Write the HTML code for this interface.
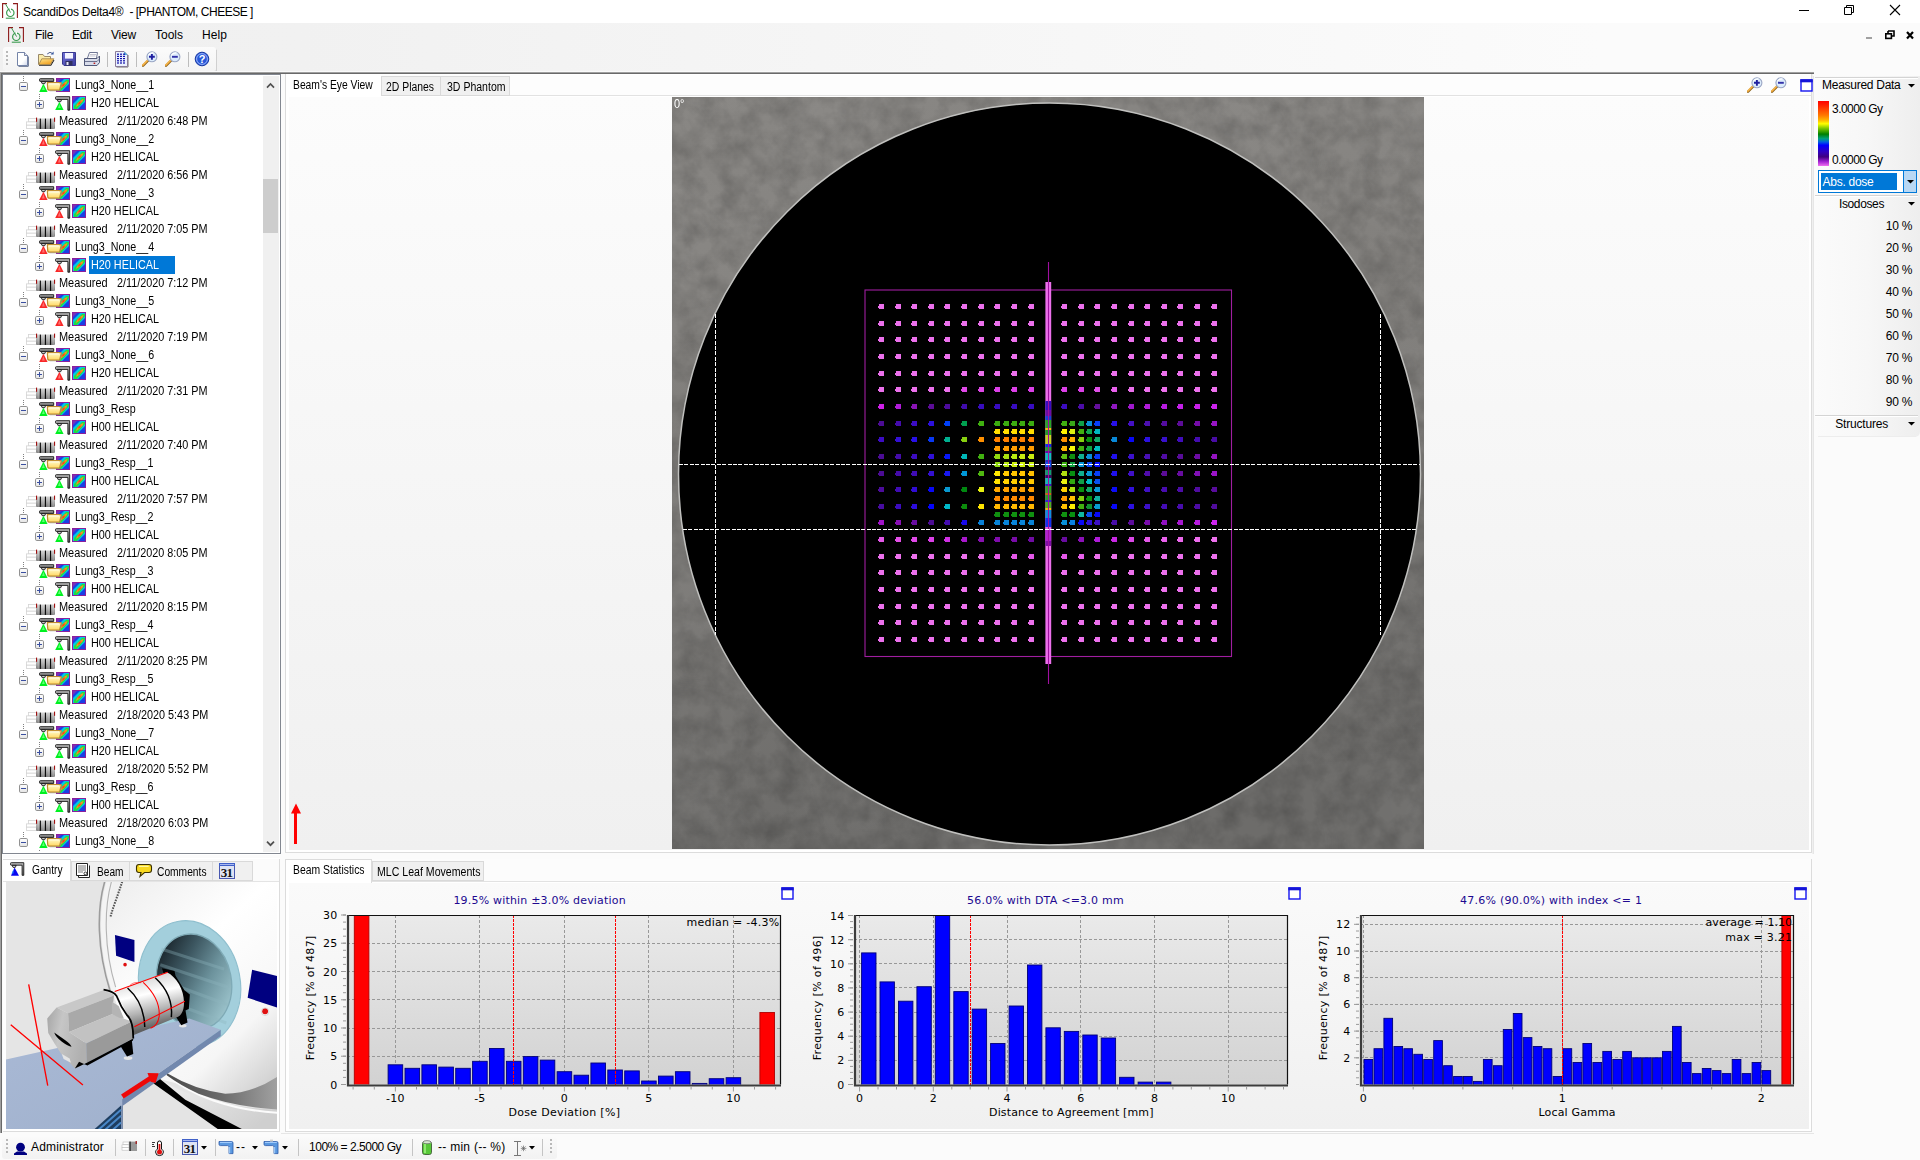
<!DOCTYPE html>
<html lang="en"><head><meta charset="utf-8"><title>ScandiDos Delta4</title>
<style>
html,body{margin:0;padding:0}
body{width:1920px;height:1160px;overflow:hidden;background:#fbfbfb;position:relative;font-family:"Liberation Sans",sans-serif;color:#000}
div,span.t,svg{position:absolute}
.t{white-space:pre;line-height:1;display:block}
.l{font-family:"Liberation Sans",sans-serif}
.d{font-family:"DejaVu Sans",sans-serif}
.s{font-family:"Liberation Serif",serif;font-weight:bold}
.b{font-weight:bold}
</style></head>
<body>
<svg width="0" height="0" style="position:absolute"><defs>
<linearGradient id="gBar" x1="0" y1="0" x2="0" y2="1"><stop offset="0" stop-color="#bbb"/><stop offset="1" stop-color="#666"/></linearGradient>
<linearGradient id="gFlap" x1="0" y1="0" x2="0.6" y2="1"><stop offset="0" stop-color="#ffe890"/><stop offset="1" stop-color="#f0a020"/></linearGradient><linearGradient id="gSave" x1="0" y1="0" x2="1" y2="1"><stop offset="0" stop-color="#7070d8"/><stop offset="1" stop-color="#3c3c9c"/></linearGradient><linearGradient id="gDoc" x1="0" y1="0" x2="1" y2="1"><stop offset="0" stop-color="#fff"/><stop offset="0.6" stop-color="#fff"/><stop offset="1" stop-color="#cdd6ea"/></linearGradient><linearGradient id="gFold" x1="0" y1="0" x2="0" y2="1"><stop offset="0" stop-color="#fffbd0"/><stop offset="1" stop-color="#ffd860"/></linearGradient>
<linearGradient id="gBox" x1="0" y1="0" x2="0" y2="1"><stop offset="0" stop-color="#fff"/><stop offset="1" stop-color="#e4e4e4"/></linearGradient>
<linearGradient id="gCyl" x1="0" y1="0" x2="0" y2="1"><stop offset="0" stop-color="#d2d2d2"/><stop offset="0.35" stop-color="#b6b6b6"/><stop offset="1" stop-color="#7e7e7e"/></linearGradient>
<linearGradient id="gDose" x1="0" y1="0" x2="1" y2="1"><stop offset="0" stop-color="#7020a0"/><stop offset="0.25" stop-color="#1030e0"/><stop offset="0.4" stop-color="#00d0e0"/><stop offset="0.5" stop-color="#30e030"/><stop offset="0.6" stop-color="#00d0e0"/><stop offset="0.8" stop-color="#1040e0"/><stop offset="1" stop-color="#2020c0"/></linearGradient>
<symbol id="iDose" viewBox="0 0 14 14"><rect x="0" y="0" width="14" height="14" fill="#8a1f9c"/><rect x="1" y="1" width="12" height="12" fill="#1a3fe6"/>
<path d="M1 13 L1 8 L8 1 L13 1 L13 6 L6 13Z" fill="#00c8e8"/><path d="M2 13 L2 10 L10 2 L13 2 L13 4 L5 13Z" fill="#20e040"/><path d="M4 11 L5 8 L9 4 L11.5 3 L10.5 5.5 L7 9Z" fill="#ff9020"/><path d="M5.5 9 L7 6.5 L9.5 5 L8 7.5Z" fill="#ff3020"/><path d="M1 1 L5 1 L1 5Z" fill="#7a2fb8"/></symbol>
<symbol id="iGan" viewBox="0 0 16 16"><path d="M0.5 1.5 Q0.5 0.7 1.4 0.7 L14.7 0.7 L14.7 14.2 L12.9 14.2 L12.9 3.4 L1.4 3.4 Q0.5 3.4 0.5 2.6Z" fill="url(#gBar)" stroke="#111" stroke-width="0.9"/><path d="M2.3 3.6 L6.6 3.6 L5.7 5.7 L3.2 5.7Z" fill="#e0e0e0" stroke="#111" stroke-width="0.9"/></symbol>
<symbol id="iGanS" viewBox="0 0 16 16"><path d="M0.5 1.5 Q0.5 0.7 1.4 0.7 L14.7 0.7 L14.7 3.4 L1.4 3.4 Q0.5 3.4 0.5 2.6Z" fill="url(#gBar)" stroke="#111" stroke-width="0.9"/><path d="M2.3 3.6 L6.6 3.6 L5.7 5.7 L3.2 5.7Z" fill="#e0e0e0" stroke="#111" stroke-width="0.9"/></symbol>
<symbol id="iConeG" viewBox="0 0 16 16"><path d="M4.4 5.8 L0.2 13.9 L8.6 13.9Z" fill="#00f020"/><path d="M4.4 8 L3 12 L5.8 12Z" fill="#60ff78"/></symbol>
<symbol id="iConeR" viewBox="0 0 16 16"><path d="M4.4 5.8 L0.2 13.9 L8.6 13.9Z" fill="#f82828"/><path d="M4.4 8 L3 12.4 L5.8 12.4Z" fill="#ff7070"/></symbol>
<symbol id="iFold" viewBox="0 0 16 10"><path d="M6.5 -2.5 L9 -2.5 L9 0 L6.5 0Z" fill="#e8b860"/><path d="M0.6 0.6 L14 0.6 Q14.8 0.6 14.6 1.6 L13.2 7.4 Q13 8.2 12 8.2 L2.4 8.2 Q1.4 8.2 1.2 7.2Z" fill="url(#gFold)" stroke="#c08c30" stroke-width="1.3"/><path d="M2.5 1.9 L12.5 1.9" stroke="#fffef0" stroke-width="1"/><path d="M14.9 2 L13.6 7.8 Q13.3 8.8 12.2 8.9 L3 8.9" fill="none" stroke="#8c8c8c" stroke-width="0.7" opacity="0.7"/></symbol>
<symbol id="iMeas" viewBox="0 0 30 12"><rect x="2.5" y="1.5" width="8" height="3.4" fill="#fff" stroke="#d4d4d4" stroke-width="0.8"/><rect x="0.5" y="4.9" width="10" height="3.3" fill="#fff" stroke="#d4d4d4" stroke-width="0.8"/><rect x="0.5" y="8.2" width="10" height="3.3" fill="#fff" stroke="#d4d4d4" stroke-width="0.8"/><rect x="10" y="1.6" width="19" height="10.3" rx="0.8" fill="url(#gCyl)"/><rect x="11.6" y="1.6" width="1.6" height="10.3" fill="#e6e6e6" opacity="0.2"/><rect x="16.4" y="1.6" width="1.6" height="10.3" fill="#e6e6e6" opacity="0.18"/><rect x="21.6" y="1.6" width="1.6" height="10.3" fill="#e6e6e6" opacity="0.18"/><rect x="26.6" y="1.6" width="1.4" height="10.3" fill="#e6e6e6" opacity="0.18"/><rect x="13.8" y="1.6" width="1.1" height="10.3" fill="#0a0a0a"/><rect x="18.9" y="1.6" width="1.1" height="10.3" fill="#0a0a0a"/><rect x="24" y="1.6" width="1.1" height="10.3" fill="#0a0a0a"/><rect x="10" y="0.6" width="1.1" height="4.2" fill="#a01010"/><rect x="28" y="0.6" width="1.1" height="4.2" fill="#a01010"/></symbol>
<symbol id="iMinus" viewBox="0 0 9 9"><rect x="0.5" y="0.5" width="8" height="8" rx="1.3" fill="url(#gBox)" stroke="#919191"/><rect x="2" y="4" width="5" height="1" fill="#3a4fa0"/></symbol>
<symbol id="iPlus" viewBox="0 0 9 9"><rect x="0.5" y="0.5" width="8" height="8" rx="1.3" fill="url(#gBox)" stroke="#919191"/><rect x="2" y="4" width="5" height="1" fill="#3a4fa0"/><rect x="4" y="2" width="1" height="5" fill="#3a4fa0"/></symbol>
<symbol id="iMax" viewBox="0 0 13 13"><rect x="1" y="1" width="11" height="11" fill="#fff" stroke="#1414f0" stroke-width="1.4"/><rect x="0.3" y="0.3" width="12.4" height="3" fill="#1414d8"/></symbol>
<symbol id="iZoom" viewBox="0 0 16 16"><path d="M1 14.6 L6.4 9.2" stroke="#8a6420" stroke-width="2.6" stroke-linecap="round"/><path d="M0.9 14.1 L6 9" stroke="#f4a838" stroke-width="1.7" stroke-linecap="round"/><path d="M0.8 13.6 L5.4 9" stroke="#ffe090" stroke-width="0.6" stroke-linecap="round"/><circle cx="9.9" cy="5.8" r="5" fill="#dcecfc" stroke="#9aa6c4" stroke-width="1.1"/><path d="M6.4 4.4 Q8 1.6 11.4 1.9" fill="none" stroke="#fff" stroke-width="1.2"/></symbol>
</defs></svg>
<!-- sec_chrome -->
<div style="left:0px;top:0px;width:1920px;height:23px;background:#fff;"></div>
<svg style="left:2px;top:3px" width="16" height="16" viewBox="0 0 16 16"><path d="M5 0.6 L0.6 0.6 L0.6 15 M11 0.6 L15.4 0.6 L15.4 15" fill="none" stroke="#8c1a1a" stroke-width="1.1"/><circle cx="8.3" cy="9.8" r="3.7" fill="none" stroke="#3c9c50" stroke-width="1.2"/><path d="M3.6 1.2 L8.6 9.6" stroke="#3c9c50" stroke-width="1"/><path d="M3.8 15.2 L12.8 15.2" stroke="#3c9c50" stroke-width="1.1"/><path d="M8.3 5 L8.3 7" stroke="#fff" stroke-width="1.4"/></svg>
<span class="t l" style="left:23.00px;top:5.00px;font-size:12px;line-height:14px;letter-spacing:-0.264px;">ScandiDos Delta4®</span>
<span class="t l" style="left:129.40px;top:5.00px;font-size:12px;line-height:14px;letter-spacing:-0.477px;">- [PHANTOM, CHEESE ]</span>
<svg style="left:1790px;top:0" width="130" height="23" viewBox="1790 0 130 23"><path d="M1799 10.5 H1809" stroke="#000" stroke-width="1"/><path d="M1844.5 7.5 H1851.5 V14.5 H1844.5Z M1846.5 7.5 V5.5 H1853.5 V12.5 H1851.5" fill="none" stroke="#000" stroke-width="1"/><path d="M1890 5 L1900 15 M1900 5 L1890 15" stroke="#000" stroke-width="1.1"/></svg>
<div style="left:0px;top:23px;width:1920px;height:49px;background:linear-gradient(90deg,#f0f0f0 0,#f1f1f1 300px,#fbfbfb 1600px,#fbfbfb 100%);"></div>
<svg style="left:8px;top:27px" width="16" height="16" viewBox="0 0 16 16"><path d="M5 0.6 L0.6 0.6 L0.6 15 M11 0.6 L15.4 0.6 L15.4 15" fill="none" stroke="#8c1a1a" stroke-width="1.1"/><circle cx="8.3" cy="9.8" r="3.7" fill="none" stroke="#3c9c50" stroke-width="1.2"/><path d="M3.6 1.2 L8.6 9.6" stroke="#3c9c50" stroke-width="1"/><path d="M3.8 15.2 L12.8 15.2" stroke="#3c9c50" stroke-width="1.1"/><path d="M8.3 5 L8.3 7" stroke="#fff" stroke-width="1.4"/></svg>
<span class="t l" style="left:35.00px;top:28.00px;font-size:12px;line-height:14px;letter-spacing:-0.334px;">File</span>
<span class="t l" style="left:72.00px;top:28.00px;font-size:12px;line-height:14px;letter-spacing:-0.169px;">Edit</span>
<span class="t l" style="left:111.00px;top:28.00px;font-size:12px;line-height:14px;letter-spacing:-0.198px;">View</span>
<span class="t l" style="left:155.00px;top:28.00px;font-size:12px;line-height:14px;letter-spacing:-0.002px;">Tools</span>
<span class="t l" style="left:202.00px;top:28.00px;font-size:12px;line-height:14px;letter-spacing:0.080px;">Help</span>
<svg style="left:1860px;top:26px" width="60" height="18" viewBox="1860 26 60 18"><rect x="1866" y="37" width="6" height="2" fill="#a0a0a0"/><path d="M1888 31 H1894 V36 H1892 M1888 31 V33" fill="none" stroke="#000" stroke-width="1.6"/><rect x="1885.8" y="33.8" width="5.6" height="4.6" fill="none" stroke="#000" stroke-width="1.6"/><path d="M1907 32 L1913 38.4 M1913 32 L1907 38.4" stroke="#000" stroke-width="2.2"/></svg>
<div style="left:3px;top:47px;width:213px;height:24px;background:linear-gradient(180deg,#fbfbfb,#f4f4f4);border-radius:3px;box-shadow:1px 1px 0 #e2e2e2"></div>
<svg style="left:0;top:47px" width="220" height="25" viewBox="0 47 220 25"><rect x="6" y="51" width="2" height="2" fill="#b8b8b8"/><rect x="6" y="55" width="2" height="2" fill="#b8b8b8"/><rect x="6" y="59" width="2" height="2" fill="#b8b8b8"/><rect x="6" y="63" width="2" height="2" fill="#b8b8b8"/><path d="M18.5 66.3 H28.3 V56.5" fill="none" stroke="#5a6888" stroke-width="1"/><path d="M17.5 52.5 H24.5 L27.5 55.5 V65.5 H17.5Z" fill="url(#gDoc)" stroke="#7484a8" stroke-width="1"/><path d="M24.5 52.5 V55.5 H27.5" fill="#e4e8f4" stroke="#5a6a90" stroke-width="0.8"/><path d="M39 65.3 H50.8 L54 60" fill="none" stroke="#222" stroke-width="1.1"/><path d="M38.5 64.5 V54.5 H43 L44.5 56.5 H50.5 V59" fill="#faeaa8" stroke="#988868" stroke-width="1"/><path d="M38.8 64.5 L41.8 58.8 H53.8 L50.3 64.5Z" fill="url(#gFlap)" stroke="#a8884c" stroke-width="0.9"/><path d="M47.2 54 Q50 50.8 52.8 53.6" fill="none" stroke="#506090" stroke-width="1"/><path d="M53.6 51.6 V54.6 H50.6Z" fill="#3858a0"/><path d="M62.5 52.5 H75.5 V65.5 H64 L62.5 64Z" fill="url(#gSave)" stroke="#383890" stroke-width="1"/><rect x="65" y="53" width="8" height="5.6" fill="#f4f4ff"/><rect x="65.5" y="61" width="7" height="4.5" fill="#303060"/><rect x="66.5" y="62" width="2" height="3" fill="#e8e8f8"/><path d="M87.5 58 L89.5 52.5 H97.5 L96.5 58" fill="#fff" stroke="#606888" stroke-width="0.9"/><path d="M84.5 58.5 H97 L99.5 56 V62.5 L97 65.5 H84.5Z" fill="#d8dcea" stroke="#505878" stroke-width="1"/><path d="M84.5 61.5 H97 L99.5 59" fill="none" stroke="#505878" stroke-width="0.8"/><rect x="93.6" y="62.6" width="1.6" height="1.4" fill="#c02020"/><path d="M90 54.5 H96 M89.5 56 H95.5" stroke="#aab" stroke-width="0.7"/><rect x="107" y="52" width="1" height="15" fill="#bdbdbd"/><path d="M116.5 67 H128 V55" fill="none" stroke="#707070" stroke-width="1"/><path d="M115.5 51.5 H124 L127.5 55 V66.5 H115.5Z" fill="#eaf0ff" stroke="#8a7c98" stroke-width="1"/><path d="M124 51.5 L124 55 L127.5 55Z" fill="#50a8d8"/><rect x="117" y="53.6" width="2" height="1.2" fill="#1010a8"/><rect x="120" y="53.6" width="2" height="1.2" fill="#1010a8"/><rect x="123" y="53.6" width="2" height="1.2" fill="#1010a8"/><rect x="117" y="55.8" width="2" height="1.2" fill="#1010a8"/><rect x="120" y="55.8" width="2" height="1.2" fill="#1010a8"/><rect x="123" y="55.8" width="2" height="1.2" fill="#1010a8"/><rect x="117" y="58" width="2" height="1.2" fill="#1010a8"/><rect x="120" y="58" width="2" height="1.2" fill="#1010a8"/><rect x="123" y="58" width="2" height="1.2" fill="#1010a8"/><rect x="117" y="60.2" width="2" height="1.2" fill="#1010a8"/><rect x="120" y="60.2" width="2" height="1.2" fill="#1010a8"/><rect x="123" y="60.2" width="2" height="1.2" fill="#1010a8"/><rect x="117" y="62.4" width="2" height="1.2" fill="#1010a8"/><rect x="120" y="62.4" width="2" height="1.2" fill="#1010a8"/><rect x="123" y="62.4" width="2" height="1.2" fill="#1010a8"/><rect x="136" y="52" width="1" height="15" fill="#bdbdbd"/><use href="#iZoom" x="142" y="51" width="16" height="16"/><path d="M149 56.8 H154.8 M151.9 53.9 V59.7" stroke="#2020a0" stroke-width="1.9"/><use href="#iZoom" x="165" y="51" width="16" height="16"/><path d="M172 56.8 H177.8" stroke="#3030a8" stroke-width="1.9"/><rect x="188" y="52" width="1" height="15" fill="#bdbdbd"/><circle cx="202" cy="59" r="6.8" fill="#2858d8" stroke="#1838a0" stroke-width="1"/><circle cx="202" cy="59" r="5.4" fill="none" stroke="#a8c0ff" stroke-width="0.9"/></svg><span class="t l b" style="left:198.74px;top:53.20px;font-size:11px;line-height:12px;color:#fff;">?</span><div style="left:216px;top:50px;width:1px;height:21px;background:#d0d0d0;"></div>
<div style="left:0px;top:71px;width:1814px;height:1px;background:#fafafa;"></div>
<div style="left:0px;top:72px;width:1814px;height:1px;background:#a0a0a0;"></div>
<div style="left:1px;top:73px;width:1813px;height:1px;background:#696969;"></div>
<div style="left:1px;top:74px;width:1813px;height:1px;background:#fcfcfc;"></div>
<div style="left:0px;top:72px;width:1px;height:1061px;background:#a0a0a0;"></div>
<div style="left:1px;top:73px;width:1px;height:1060px;background:#696969;"></div>
<!-- sec_tree -->
<div style="left:2px;top:74px;width:279px;height:780px;background:#fff;box-shadow:inset 0 0 0 1px #828790"></div>
<div style="left:263px;top:76px;width:16px;height:776px;background:#f0f0f0;"></div>
<div style="left:263px;top:179px;width:15px;height:54px;background:#cdcdcd;"></div>
<svg style="left:263px;top:76px" width="16" height="776" viewBox="0 0 16 776"><path d="M4 11.6 L7.5 8 L11 11.6" fill="none" stroke="#505050" stroke-width="1.7"/><path d="M4 765.6 L7.5 769.2 L11 765.6" fill="none" stroke="#505050" stroke-width="1.7"/></svg>
<svg style="left:0;top:76px" width="262" height="776" viewBox="0 76 262 776"><rect x="23" y="76" width="1" height="1" fill="#808080"/><rect x="23" y="78" width="1" height="1" fill="#808080"/><rect x="23" y="80" width="1" height="1" fill="#808080"/><use href="#iMinus" x="19" y="82" width="9" height="9"/><use href="#iDose" x="56" y="78" width="14" height="14"/><use href="#iGanS" x="39" y="78" width="16" height="16"/><use href="#iConeG" x="39" y="78" width="16" height="16"/><use href="#iFold" x="46.6" y="82" width="16" height="10"/><rect x="39" y="94" width="1" height="1" fill="#808080"/><rect x="39" y="96" width="1" height="1" fill="#808080"/><rect x="39" y="98" width="1" height="1" fill="#808080"/><use href="#iPlus" x="35" y="100" width="9" height="9"/><use href="#iGan" x="55" y="96" width="16" height="16"/><use href="#iConeG" x="55" y="96" width="16" height="16"/><use href="#iDose" x="72" y="96" width="14" height="14"/><use href="#iMeas" x="26" y="117" width="30" height="12"/><rect x="23" y="130" width="1" height="1" fill="#808080"/><rect x="23" y="132" width="1" height="1" fill="#808080"/><rect x="23" y="134" width="1" height="1" fill="#808080"/><use href="#iMinus" x="19" y="136" width="9" height="9"/><use href="#iDose" x="56" y="132" width="14" height="14"/><use href="#iGanS" x="39" y="132" width="16" height="16"/><use href="#iConeR" x="39" y="132" width="16" height="16"/><use href="#iFold" x="46.6" y="136" width="16" height="10"/><rect x="39" y="148" width="1" height="1" fill="#808080"/><rect x="39" y="150" width="1" height="1" fill="#808080"/><rect x="39" y="152" width="1" height="1" fill="#808080"/><use href="#iPlus" x="35" y="154" width="9" height="9"/><use href="#iGan" x="55" y="150" width="16" height="16"/><use href="#iConeR" x="55" y="150" width="16" height="16"/><use href="#iDose" x="72" y="150" width="14" height="14"/><use href="#iMeas" x="26" y="171" width="30" height="12"/><rect x="23" y="184" width="1" height="1" fill="#808080"/><rect x="23" y="186" width="1" height="1" fill="#808080"/><rect x="23" y="188" width="1" height="1" fill="#808080"/><use href="#iMinus" x="19" y="190" width="9" height="9"/><use href="#iDose" x="56" y="186" width="14" height="14"/><use href="#iGanS" x="39" y="186" width="16" height="16"/><use href="#iConeR" x="39" y="186" width="16" height="16"/><use href="#iFold" x="46.6" y="190" width="16" height="10"/><rect x="39" y="202" width="1" height="1" fill="#808080"/><rect x="39" y="204" width="1" height="1" fill="#808080"/><rect x="39" y="206" width="1" height="1" fill="#808080"/><use href="#iPlus" x="35" y="208" width="9" height="9"/><use href="#iGan" x="55" y="204" width="16" height="16"/><use href="#iConeR" x="55" y="204" width="16" height="16"/><use href="#iDose" x="72" y="204" width="14" height="14"/><use href="#iMeas" x="26" y="225" width="30" height="12"/><rect x="23" y="238" width="1" height="1" fill="#808080"/><rect x="23" y="240" width="1" height="1" fill="#808080"/><rect x="23" y="242" width="1" height="1" fill="#808080"/><use href="#iMinus" x="19" y="244" width="9" height="9"/><use href="#iDose" x="56" y="240" width="14" height="14"/><use href="#iGanS" x="39" y="240" width="16" height="16"/><use href="#iConeR" x="39" y="240" width="16" height="16"/><use href="#iFold" x="46.6" y="244" width="16" height="10"/><rect x="39" y="256" width="1" height="1" fill="#808080"/><rect x="39" y="258" width="1" height="1" fill="#808080"/><rect x="39" y="260" width="1" height="1" fill="#808080"/><use href="#iPlus" x="35" y="262" width="9" height="9"/><use href="#iGan" x="55" y="258" width="16" height="16"/><use href="#iConeR" x="55" y="258" width="16" height="16"/><use href="#iDose" x="72" y="258" width="14" height="14"/><use href="#iMeas" x="26" y="279" width="30" height="12"/><rect x="23" y="292" width="1" height="1" fill="#808080"/><rect x="23" y="294" width="1" height="1" fill="#808080"/><rect x="23" y="296" width="1" height="1" fill="#808080"/><use href="#iMinus" x="19" y="298" width="9" height="9"/><use href="#iDose" x="56" y="294" width="14" height="14"/><use href="#iGanS" x="39" y="294" width="16" height="16"/><use href="#iConeR" x="39" y="294" width="16" height="16"/><use href="#iFold" x="46.6" y="298" width="16" height="10"/><rect x="39" y="310" width="1" height="1" fill="#808080"/><rect x="39" y="312" width="1" height="1" fill="#808080"/><rect x="39" y="314" width="1" height="1" fill="#808080"/><use href="#iPlus" x="35" y="316" width="9" height="9"/><use href="#iGan" x="55" y="312" width="16" height="16"/><use href="#iConeR" x="55" y="312" width="16" height="16"/><use href="#iDose" x="72" y="312" width="14" height="14"/><use href="#iMeas" x="26" y="333" width="30" height="12"/><rect x="23" y="346" width="1" height="1" fill="#808080"/><rect x="23" y="348" width="1" height="1" fill="#808080"/><rect x="23" y="350" width="1" height="1" fill="#808080"/><use href="#iMinus" x="19" y="352" width="9" height="9"/><use href="#iDose" x="56" y="348" width="14" height="14"/><use href="#iGanS" x="39" y="348" width="16" height="16"/><use href="#iConeR" x="39" y="348" width="16" height="16"/><use href="#iFold" x="46.6" y="352" width="16" height="10"/><rect x="39" y="364" width="1" height="1" fill="#808080"/><rect x="39" y="366" width="1" height="1" fill="#808080"/><rect x="39" y="368" width="1" height="1" fill="#808080"/><use href="#iPlus" x="35" y="370" width="9" height="9"/><use href="#iGan" x="55" y="366" width="16" height="16"/><use href="#iConeR" x="55" y="366" width="16" height="16"/><use href="#iDose" x="72" y="366" width="14" height="14"/><use href="#iMeas" x="26" y="387" width="30" height="12"/><rect x="23" y="400" width="1" height="1" fill="#808080"/><rect x="23" y="402" width="1" height="1" fill="#808080"/><rect x="23" y="404" width="1" height="1" fill="#808080"/><use href="#iMinus" x="19" y="406" width="9" height="9"/><use href="#iDose" x="56" y="402" width="14" height="14"/><use href="#iGanS" x="39" y="402" width="16" height="16"/><use href="#iConeG" x="39" y="402" width="16" height="16"/><use href="#iFold" x="46.6" y="406" width="16" height="10"/><rect x="39" y="418" width="1" height="1" fill="#808080"/><rect x="39" y="420" width="1" height="1" fill="#808080"/><rect x="39" y="422" width="1" height="1" fill="#808080"/><use href="#iPlus" x="35" y="424" width="9" height="9"/><use href="#iGan" x="55" y="420" width="16" height="16"/><use href="#iConeG" x="55" y="420" width="16" height="16"/><use href="#iDose" x="72" y="420" width="14" height="14"/><use href="#iMeas" x="26" y="441" width="30" height="12"/><rect x="23" y="454" width="1" height="1" fill="#808080"/><rect x="23" y="456" width="1" height="1" fill="#808080"/><rect x="23" y="458" width="1" height="1" fill="#808080"/><use href="#iMinus" x="19" y="460" width="9" height="9"/><use href="#iDose" x="56" y="456" width="14" height="14"/><use href="#iGanS" x="39" y="456" width="16" height="16"/><use href="#iConeG" x="39" y="456" width="16" height="16"/><use href="#iFold" x="46.6" y="460" width="16" height="10"/><rect x="39" y="472" width="1" height="1" fill="#808080"/><rect x="39" y="474" width="1" height="1" fill="#808080"/><rect x="39" y="476" width="1" height="1" fill="#808080"/><use href="#iPlus" x="35" y="478" width="9" height="9"/><use href="#iGan" x="55" y="474" width="16" height="16"/><use href="#iConeG" x="55" y="474" width="16" height="16"/><use href="#iDose" x="72" y="474" width="14" height="14"/><use href="#iMeas" x="26" y="495" width="30" height="12"/><rect x="23" y="508" width="1" height="1" fill="#808080"/><rect x="23" y="510" width="1" height="1" fill="#808080"/><rect x="23" y="512" width="1" height="1" fill="#808080"/><use href="#iMinus" x="19" y="514" width="9" height="9"/><use href="#iDose" x="56" y="510" width="14" height="14"/><use href="#iGanS" x="39" y="510" width="16" height="16"/><use href="#iConeG" x="39" y="510" width="16" height="16"/><use href="#iFold" x="46.6" y="514" width="16" height="10"/><rect x="39" y="526" width="1" height="1" fill="#808080"/><rect x="39" y="528" width="1" height="1" fill="#808080"/><rect x="39" y="530" width="1" height="1" fill="#808080"/><use href="#iPlus" x="35" y="532" width="9" height="9"/><use href="#iGan" x="55" y="528" width="16" height="16"/><use href="#iConeG" x="55" y="528" width="16" height="16"/><use href="#iDose" x="72" y="528" width="14" height="14"/><use href="#iMeas" x="26" y="549" width="30" height="12"/><rect x="23" y="562" width="1" height="1" fill="#808080"/><rect x="23" y="564" width="1" height="1" fill="#808080"/><rect x="23" y="566" width="1" height="1" fill="#808080"/><use href="#iMinus" x="19" y="568" width="9" height="9"/><use href="#iDose" x="56" y="564" width="14" height="14"/><use href="#iGanS" x="39" y="564" width="16" height="16"/><use href="#iConeG" x="39" y="564" width="16" height="16"/><use href="#iFold" x="46.6" y="568" width="16" height="10"/><rect x="39" y="580" width="1" height="1" fill="#808080"/><rect x="39" y="582" width="1" height="1" fill="#808080"/><rect x="39" y="584" width="1" height="1" fill="#808080"/><use href="#iPlus" x="35" y="586" width="9" height="9"/><use href="#iGan" x="55" y="582" width="16" height="16"/><use href="#iConeG" x="55" y="582" width="16" height="16"/><use href="#iDose" x="72" y="582" width="14" height="14"/><use href="#iMeas" x="26" y="603" width="30" height="12"/><rect x="23" y="616" width="1" height="1" fill="#808080"/><rect x="23" y="618" width="1" height="1" fill="#808080"/><rect x="23" y="620" width="1" height="1" fill="#808080"/><use href="#iMinus" x="19" y="622" width="9" height="9"/><use href="#iDose" x="56" y="618" width="14" height="14"/><use href="#iGanS" x="39" y="618" width="16" height="16"/><use href="#iConeG" x="39" y="618" width="16" height="16"/><use href="#iFold" x="46.6" y="622" width="16" height="10"/><rect x="39" y="634" width="1" height="1" fill="#808080"/><rect x="39" y="636" width="1" height="1" fill="#808080"/><rect x="39" y="638" width="1" height="1" fill="#808080"/><use href="#iPlus" x="35" y="640" width="9" height="9"/><use href="#iGan" x="55" y="636" width="16" height="16"/><use href="#iConeG" x="55" y="636" width="16" height="16"/><use href="#iDose" x="72" y="636" width="14" height="14"/><use href="#iMeas" x="26" y="657" width="30" height="12"/><rect x="23" y="670" width="1" height="1" fill="#808080"/><rect x="23" y="672" width="1" height="1" fill="#808080"/><rect x="23" y="674" width="1" height="1" fill="#808080"/><use href="#iMinus" x="19" y="676" width="9" height="9"/><use href="#iDose" x="56" y="672" width="14" height="14"/><use href="#iGanS" x="39" y="672" width="16" height="16"/><use href="#iConeG" x="39" y="672" width="16" height="16"/><use href="#iFold" x="46.6" y="676" width="16" height="10"/><rect x="39" y="688" width="1" height="1" fill="#808080"/><rect x="39" y="690" width="1" height="1" fill="#808080"/><rect x="39" y="692" width="1" height="1" fill="#808080"/><use href="#iPlus" x="35" y="694" width="9" height="9"/><use href="#iGan" x="55" y="690" width="16" height="16"/><use href="#iConeG" x="55" y="690" width="16" height="16"/><use href="#iDose" x="72" y="690" width="14" height="14"/><use href="#iMeas" x="26" y="711" width="30" height="12"/><rect x="23" y="724" width="1" height="1" fill="#808080"/><rect x="23" y="726" width="1" height="1" fill="#808080"/><rect x="23" y="728" width="1" height="1" fill="#808080"/><use href="#iMinus" x="19" y="730" width="9" height="9"/><use href="#iDose" x="56" y="726" width="14" height="14"/><use href="#iGanS" x="39" y="726" width="16" height="16"/><use href="#iConeG" x="39" y="726" width="16" height="16"/><use href="#iFold" x="46.6" y="730" width="16" height="10"/><rect x="39" y="742" width="1" height="1" fill="#808080"/><rect x="39" y="744" width="1" height="1" fill="#808080"/><rect x="39" y="746" width="1" height="1" fill="#808080"/><use href="#iPlus" x="35" y="748" width="9" height="9"/><use href="#iGan" x="55" y="744" width="16" height="16"/><use href="#iConeG" x="55" y="744" width="16" height="16"/><use href="#iDose" x="72" y="744" width="14" height="14"/><use href="#iMeas" x="26" y="765" width="30" height="12"/><rect x="23" y="778" width="1" height="1" fill="#808080"/><rect x="23" y="780" width="1" height="1" fill="#808080"/><rect x="23" y="782" width="1" height="1" fill="#808080"/><use href="#iMinus" x="19" y="784" width="9" height="9"/><use href="#iDose" x="56" y="780" width="14" height="14"/><use href="#iGanS" x="39" y="780" width="16" height="16"/><use href="#iConeG" x="39" y="780" width="16" height="16"/><use href="#iFold" x="46.6" y="784" width="16" height="10"/><rect x="39" y="796" width="1" height="1" fill="#808080"/><rect x="39" y="798" width="1" height="1" fill="#808080"/><rect x="39" y="800" width="1" height="1" fill="#808080"/><use href="#iPlus" x="35" y="802" width="9" height="9"/><use href="#iGan" x="55" y="798" width="16" height="16"/><use href="#iConeG" x="55" y="798" width="16" height="16"/><use href="#iDose" x="72" y="798" width="14" height="14"/><use href="#iMeas" x="26" y="819" width="30" height="12"/><rect x="23" y="832" width="1" height="1" fill="#808080"/><rect x="23" y="834" width="1" height="1" fill="#808080"/><rect x="23" y="836" width="1" height="1" fill="#808080"/><use href="#iMinus" x="19" y="838" width="9" height="9"/><use href="#iDose" x="56" y="834" width="14" height="14"/><use href="#iGanS" x="39" y="834" width="16" height="16"/><use href="#iConeG" x="39" y="834" width="16" height="16"/><use href="#iFold" x="46.6" y="838" width="16" height="10"/></svg>
<span class="t l" style="left:75.40px;top:78.00px;font-size:12.5px;line-height:14px;transform:scaleX(0.8554);transform-origin:0 0;">Lung3_None__1</span>
<span class="t l" style="left:91.00px;top:96.00px;font-size:12.5px;line-height:14px;transform:scaleX(0.8662);transform-origin:0 0;">H20 HELICAL</span>
<span class="t l" style="left:59.30px;top:114.00px;font-size:12.5px;line-height:14px;transform:scaleX(0.8762);transform-origin:0 0;">Measured</span>
<span class="t l" style="left:116.80px;top:114.00px;font-size:12.5px;line-height:14px;transform:scaleX(0.8650);transform-origin:0 0;">2/11/2020 6:48 PM</span>
<span class="t l" style="left:75.40px;top:132.00px;font-size:12.5px;line-height:14px;transform:scaleX(0.8554);transform-origin:0 0;">Lung3_None__2</span>
<span class="t l" style="left:91.00px;top:150.00px;font-size:12.5px;line-height:14px;transform:scaleX(0.8662);transform-origin:0 0;">H20 HELICAL</span>
<span class="t l" style="left:59.30px;top:168.00px;font-size:12.5px;line-height:14px;transform:scaleX(0.8762);transform-origin:0 0;">Measured</span>
<span class="t l" style="left:116.80px;top:168.00px;font-size:12.5px;line-height:14px;transform:scaleX(0.8650);transform-origin:0 0;">2/11/2020 6:56 PM</span>
<span class="t l" style="left:75.40px;top:186.00px;font-size:12.5px;line-height:14px;transform:scaleX(0.8554);transform-origin:0 0;">Lung3_None__3</span>
<span class="t l" style="left:91.00px;top:204.00px;font-size:12.5px;line-height:14px;transform:scaleX(0.8662);transform-origin:0 0;">H20 HELICAL</span>
<span class="t l" style="left:59.30px;top:222.00px;font-size:12.5px;line-height:14px;transform:scaleX(0.8762);transform-origin:0 0;">Measured</span>
<span class="t l" style="left:116.80px;top:222.00px;font-size:12.5px;line-height:14px;transform:scaleX(0.8650);transform-origin:0 0;">2/11/2020 7:05 PM</span>
<span class="t l" style="left:75.40px;top:240.00px;font-size:12.5px;line-height:14px;transform:scaleX(0.8554);transform-origin:0 0;">Lung3_None__4</span>
<div style="left:89px;top:256px;width:86px;height:18px;background:#0078d7;"></div>
<span class="t l" style="left:91.00px;top:258.00px;font-size:12.5px;line-height:14px;transform:scaleX(0.8662);transform-origin:0 0;color:#fff;">H20 HELICAL</span>
<span class="t l" style="left:59.30px;top:276.00px;font-size:12.5px;line-height:14px;transform:scaleX(0.8762);transform-origin:0 0;">Measured</span>
<span class="t l" style="left:116.80px;top:276.00px;font-size:12.5px;line-height:14px;transform:scaleX(0.8650);transform-origin:0 0;">2/11/2020 7:12 PM</span>
<span class="t l" style="left:75.40px;top:294.00px;font-size:12.5px;line-height:14px;transform:scaleX(0.8554);transform-origin:0 0;">Lung3_None__5</span>
<span class="t l" style="left:91.00px;top:312.00px;font-size:12.5px;line-height:14px;transform:scaleX(0.8662);transform-origin:0 0;">H20 HELICAL</span>
<span class="t l" style="left:59.30px;top:330.00px;font-size:12.5px;line-height:14px;transform:scaleX(0.8762);transform-origin:0 0;">Measured</span>
<span class="t l" style="left:116.80px;top:330.00px;font-size:12.5px;line-height:14px;transform:scaleX(0.8650);transform-origin:0 0;">2/11/2020 7:19 PM</span>
<span class="t l" style="left:75.40px;top:348.00px;font-size:12.5px;line-height:14px;transform:scaleX(0.8554);transform-origin:0 0;">Lung3_None__6</span>
<span class="t l" style="left:91.00px;top:366.00px;font-size:12.5px;line-height:14px;transform:scaleX(0.8662);transform-origin:0 0;">H20 HELICAL</span>
<span class="t l" style="left:59.30px;top:384.00px;font-size:12.5px;line-height:14px;transform:scaleX(0.8762);transform-origin:0 0;">Measured</span>
<span class="t l" style="left:116.80px;top:384.00px;font-size:12.5px;line-height:14px;transform:scaleX(0.8650);transform-origin:0 0;">2/11/2020 7:31 PM</span>
<span class="t l" style="left:75.40px;top:402.00px;font-size:12.5px;line-height:14px;transform:scaleX(0.8554);transform-origin:0 0;">Lung3_Resp</span>
<span class="t l" style="left:91.00px;top:420.00px;font-size:12.5px;line-height:14px;transform:scaleX(0.8662);transform-origin:0 0;">H00 HELICAL</span>
<span class="t l" style="left:59.30px;top:438.00px;font-size:12.5px;line-height:14px;transform:scaleX(0.8762);transform-origin:0 0;">Measured</span>
<span class="t l" style="left:116.80px;top:438.00px;font-size:12.5px;line-height:14px;transform:scaleX(0.8650);transform-origin:0 0;">2/11/2020 7:40 PM</span>
<span class="t l" style="left:75.40px;top:456.00px;font-size:12.5px;line-height:14px;transform:scaleX(0.8554);transform-origin:0 0;">Lung3_Resp__1</span>
<span class="t l" style="left:91.00px;top:474.00px;font-size:12.5px;line-height:14px;transform:scaleX(0.8662);transform-origin:0 0;">H00 HELICAL</span>
<span class="t l" style="left:59.30px;top:492.00px;font-size:12.5px;line-height:14px;transform:scaleX(0.8762);transform-origin:0 0;">Measured</span>
<span class="t l" style="left:116.80px;top:492.00px;font-size:12.5px;line-height:14px;transform:scaleX(0.8650);transform-origin:0 0;">2/11/2020 7:57 PM</span>
<span class="t l" style="left:75.40px;top:510.00px;font-size:12.5px;line-height:14px;transform:scaleX(0.8554);transform-origin:0 0;">Lung3_Resp__2</span>
<span class="t l" style="left:91.00px;top:528.00px;font-size:12.5px;line-height:14px;transform:scaleX(0.8662);transform-origin:0 0;">H00 HELICAL</span>
<span class="t l" style="left:59.30px;top:546.00px;font-size:12.5px;line-height:14px;transform:scaleX(0.8762);transform-origin:0 0;">Measured</span>
<span class="t l" style="left:116.80px;top:546.00px;font-size:12.5px;line-height:14px;transform:scaleX(0.8650);transform-origin:0 0;">2/11/2020 8:05 PM</span>
<span class="t l" style="left:75.40px;top:564.00px;font-size:12.5px;line-height:14px;transform:scaleX(0.8554);transform-origin:0 0;">Lung3_Resp__3</span>
<span class="t l" style="left:91.00px;top:582.00px;font-size:12.5px;line-height:14px;transform:scaleX(0.8662);transform-origin:0 0;">H00 HELICAL</span>
<span class="t l" style="left:59.30px;top:600.00px;font-size:12.5px;line-height:14px;transform:scaleX(0.8762);transform-origin:0 0;">Measured</span>
<span class="t l" style="left:116.80px;top:600.00px;font-size:12.5px;line-height:14px;transform:scaleX(0.8650);transform-origin:0 0;">2/11/2020 8:15 PM</span>
<span class="t l" style="left:75.40px;top:618.00px;font-size:12.5px;line-height:14px;transform:scaleX(0.8554);transform-origin:0 0;">Lung3_Resp__4</span>
<span class="t l" style="left:91.00px;top:636.00px;font-size:12.5px;line-height:14px;transform:scaleX(0.8662);transform-origin:0 0;">H00 HELICAL</span>
<span class="t l" style="left:59.30px;top:654.00px;font-size:12.5px;line-height:14px;transform:scaleX(0.8762);transform-origin:0 0;">Measured</span>
<span class="t l" style="left:116.80px;top:654.00px;font-size:12.5px;line-height:14px;transform:scaleX(0.8650);transform-origin:0 0;">2/11/2020 8:25 PM</span>
<span class="t l" style="left:75.40px;top:672.00px;font-size:12.5px;line-height:14px;transform:scaleX(0.8554);transform-origin:0 0;">Lung3_Resp__5</span>
<span class="t l" style="left:91.00px;top:690.00px;font-size:12.5px;line-height:14px;transform:scaleX(0.8662);transform-origin:0 0;">H00 HELICAL</span>
<span class="t l" style="left:59.30px;top:708.00px;font-size:12.5px;line-height:14px;transform:scaleX(0.8762);transform-origin:0 0;">Measured</span>
<span class="t l" style="left:116.80px;top:708.00px;font-size:12.5px;line-height:14px;transform:scaleX(0.8650);transform-origin:0 0;">2/18/2020 5:43 PM</span>
<span class="t l" style="left:75.40px;top:726.00px;font-size:12.5px;line-height:14px;transform:scaleX(0.8554);transform-origin:0 0;">Lung3_None__7</span>
<span class="t l" style="left:91.00px;top:744.00px;font-size:12.5px;line-height:14px;transform:scaleX(0.8662);transform-origin:0 0;">H20 HELICAL</span>
<span class="t l" style="left:59.30px;top:762.00px;font-size:12.5px;line-height:14px;transform:scaleX(0.8762);transform-origin:0 0;">Measured</span>
<span class="t l" style="left:116.80px;top:762.00px;font-size:12.5px;line-height:14px;transform:scaleX(0.8650);transform-origin:0 0;">2/18/2020 5:52 PM</span>
<span class="t l" style="left:75.40px;top:780.00px;font-size:12.5px;line-height:14px;transform:scaleX(0.8554);transform-origin:0 0;">Lung3_Resp__6</span>
<span class="t l" style="left:91.00px;top:798.00px;font-size:12.5px;line-height:14px;transform:scaleX(0.8662);transform-origin:0 0;">H00 HELICAL</span>
<span class="t l" style="left:59.30px;top:816.00px;font-size:12.5px;line-height:14px;transform:scaleX(0.8762);transform-origin:0 0;">Measured</span>
<span class="t l" style="left:116.80px;top:816.00px;font-size:12.5px;line-height:14px;transform:scaleX(0.8650);transform-origin:0 0;">2/18/2020 6:03 PM</span>
<span class="t l" style="left:75.40px;top:834.00px;font-size:12.5px;line-height:14px;transform:scaleX(0.8554);transform-origin:0 0;">Lung3_None__8</span>
<div style="left:39px;top:850px;width:1px;height:1px;background:#808080;"></div>
<!-- sec_view -->
<div style="left:281px;top:74px;width:1533px;height:785px;background:#fbfbfb;"></div>
<div style="left:285px;top:74px;width:1527px;height:779px;background:#fff;box-shadow:inset 1px 0 0 #dcdcdc, inset -1px -1px 0 #dcdcdc"></div>
<div style="left:1812px;top:74px;width:1px;height:1061px;background:#f0f0f0;"></div>
<div style="left:1813px;top:76px;width:1px;height:1059px;background:#e6e6e6;"></div>
<div style="left:286px;top:75px;width:1525px;height:21px;background:#fdfdfd;"></div>
<div style="left:289px;top:97px;width:1520px;height:753px;background:linear-gradient(180deg,#fcfcfc 0,#fbfbfb 60px,#f0f0f0 100%);"></div>
<div style="left:286px;top:95px;width:1525px;height:1px;background:#e2e2e2;"></div>
<div style="left:286px;top:75px;width:95px;height:22px;background:#fff;"></div>
<div style="left:381px;top:76px;width:60px;height:20px;background:#f0f0f0;box-shadow:inset 0 0 0 1px #d9d9d9"></div>
<div style="left:440px;top:76px;width:70px;height:20px;background:#f0f0f0;box-shadow:inset 0 0 0 1px #d9d9d9"></div>
<span class="t l" style="left:293.40px;top:78.00px;font-size:12.5px;line-height:14px;transform:scaleX(0.8257);transform-origin:0 0;">Beam&#x27;s Eye View</span>
<span class="t l" style="left:386.00px;top:80.00px;font-size:12.5px;line-height:14px;transform:scaleX(0.8323);transform-origin:0 0;">2D Planes</span>
<span class="t l" style="left:447.00px;top:80.00px;font-size:12.5px;line-height:14px;transform:scaleX(0.8420);transform-origin:0 0;">3D Phantom</span>
<svg style="left:1740px;top:75px" width="75" height="21" viewBox="1740 75 75 21"><use href="#iZoom" x="1747" y="77" width="16" height="16"/><path d="M1754 82.8 H1759.8 M1756.9 79.9 V85.7" stroke="#2020a0" stroke-width="1.9"/><use href="#iZoom" x="1771" y="77" width="16" height="16"/><path d="M1778 82.8 H1783.8" stroke="#3030a8" stroke-width="1.9"/><use href="#iMax" x="1800" y="79" width="13" height="13"/></svg>
<svg style="left:288px;top:800px" width="16" height="46" viewBox="288 800 16 46"><path d="M295.5 844 V810" stroke="#f00" stroke-width="3"/><path d="M296 803.5 L291 813.5 L301 813.5Z" fill="#f00"/></svg>
<svg style="left:672px;top:97px" width="752" height="752" viewBox="672 97 752 752"><defs><filter id="fTex" x="0" y="0" width="100%" height="100%"><feTurbulence type="fractalNoise" baseFrequency="0.05" numOctaves="4" seed="7" result="n"/><feColorMatrix in="n" type="matrix" values="0 0 0 0 0  0 0 0 0 0  0 0 0 0 0  0.25 0.15 0 0 -0.14"/></filter><filter id="fTex2" x="0" y="0" width="100%" height="100%"><feTurbulence type="fractalNoise" baseFrequency="0.006" numOctaves="2" seed="3" result="n"/><feColorMatrix in="n" type="matrix" values="0 0 0 0 1  0 0 0 0 1  0 0 0 0 1  1.6 0 0 0 -0.62"/></filter><linearGradient id="gImg" x1="0" y1="0" x2="0.15" y2="1"><stop offset="0" stop-color="#898784"/><stop offset="0.45" stop-color="#807e7b"/><stop offset="1" stop-color="#6d6c6a"/></linearGradient><filter id="fBlurY" x="-0.5" y="-0.02" width="2" height="1.04"><feGaussianBlur stdDeviation="0 0.7"/></filter><linearGradient id="gCB" x1="0" y1="0" x2="0" y2="1"><stop offset="0" stop-color="#ec70ec"/><stop offset="0.285" stop-color="#ec70ec"/><stop offset="0.31" stop-color="#c030e0"/><stop offset="0.325" stop-color="#5010b0"/><stop offset="0.345" stop-color="#3020d0"/><stop offset="0.355" stop-color="#20a040"/><stop offset="0.38" stop-color="#30a820"/><stop offset="0.395" stop-color="#e0d010"/><stop offset="0.41" stop-color="#30a030"/><stop offset="0.425" stop-color="#c8d810"/><stop offset="0.44" stop-color="#30a030"/><stop offset="0.455" stop-color="#10b8b0"/><stop offset="0.475" stop-color="#1040f0"/><stop offset="0.49" stop-color="#10a060"/><stop offset="0.51" stop-color="#10b8a8"/><stop offset="0.53" stop-color="#30a030"/><stop offset="0.55" stop-color="#60b820"/><stop offset="0.57" stop-color="#30a030"/><stop offset="0.59" stop-color="#1080e0"/><stop offset="0.61" stop-color="#1030f0"/><stop offset="0.63" stop-color="#2010e0"/><stop offset="0.645" stop-color="#c030e0"/><stop offset="0.665" stop-color="#a018c8"/><stop offset="0.69" stop-color="#8010b0"/><stop offset="0.71" stop-color="#e058e8"/><stop offset="0.73" stop-color="#ec70ec"/><stop offset="1" stop-color="#ec70ec"/></linearGradient></defs><rect x="672" y="97" width="752" height="752" fill="url(#gImg)"/><rect x="672" y="97" width="752" height="752" fill="#3a3937" filter="url(#fTex)"/><rect x="672" y="97" width="752" height="752" filter="url(#fTex2)" opacity="0.07"/><circle cx="1049.5" cy="474" r="371" fill="#000" stroke="#c0c0be" stroke-width="1.5"/><rect x="865" y="290" width="366.5" height="366.5" fill="none" stroke="#a01ea0" stroke-width="1.1"/><g shape-rendering="crispEdges"><path d="M879 304h5v5h-5v-1.5h-1v-2h1z" fill="#ec70ec"/><path d="M896 304h5v5h-5v-1.5h-1v-2h1z" fill="#ec70ec"/><path d="M912 304h5v5h-5v-1.5h-1v-2h1z" fill="#ec70ec"/><path d="M929 304h5v5h-5v-1.5h-1v-2h1z" fill="#ec70ec"/><path d="M945 304h5v5h-5v-1.5h-1v-2h1z" fill="#ec70ec"/><path d="M962 304h5v5h-5v-1.5h-1v-2h1z" fill="#ec70ec"/><path d="M979 304h5v5h-5v-1.5h-1v-2h1z" fill="#ec70ec"/><path d="M995 304h5v5h-5v-1.5h-1v-2h1z" fill="#ec70ec"/><path d="M1012 304h5v5h-5v-1.5h-1v-2h1z" fill="#ec70ec"/><path d="M1029 304h5v5h-5v-1.5h-1v-2h1z" fill="#ec70ec"/><path d="M1062 304h5v5h-5v-1.5h-1v-2h1z" fill="#ec70ec"/><path d="M1079 304h5v5h-5v-1.5h-1v-2h1z" fill="#ec70ec"/><path d="M1095 304h5v5h-5v-1.5h-1v-2h1z" fill="#ec70ec"/><path d="M1112 304h5v5h-5v-1.5h-1v-2h1z" fill="#ec70ec"/><path d="M1129 304h5v5h-5v-1.5h-1v-2h1z" fill="#ec70ec"/><path d="M1145 304h5v5h-5v-1.5h-1v-2h1z" fill="#ec70ec"/><path d="M1162 304h5v5h-5v-1.5h-1v-2h1z" fill="#ec70ec"/><path d="M1178 304h5v5h-5v-1.5h-1v-2h1z" fill="#ec70ec"/><path d="M1195 304h5v5h-5v-1.5h-1v-2h1z" fill="#ec70ec"/><path d="M1212 304h5v5h-5v-1.5h-1v-2h1z" fill="#ec70ec"/><path d="M879 321h5v5h-5v-1.5h-1v-2h1z" fill="#ec70ec"/><path d="M896 321h5v5h-5v-1.5h-1v-2h1z" fill="#ec70ec"/><path d="M912 321h5v5h-5v-1.5h-1v-2h1z" fill="#ec70ec"/><path d="M929 321h5v5h-5v-1.5h-1v-2h1z" fill="#ec70ec"/><path d="M945 321h5v5h-5v-1.5h-1v-2h1z" fill="#ec70ec"/><path d="M962 321h5v5h-5v-1.5h-1v-2h1z" fill="#ec70ec"/><path d="M979 321h5v5h-5v-1.5h-1v-2h1z" fill="#ec70ec"/><path d="M995 321h5v5h-5v-1.5h-1v-2h1z" fill="#ec70ec"/><path d="M1012 321h5v5h-5v-1.5h-1v-2h1z" fill="#ec70ec"/><path d="M1029 321h5v5h-5v-1.5h-1v-2h1z" fill="#ec70ec"/><path d="M1062 321h5v5h-5v-1.5h-1v-2h1z" fill="#ec70ec"/><path d="M1079 321h5v5h-5v-1.5h-1v-2h1z" fill="#ec70ec"/><path d="M1095 321h5v5h-5v-1.5h-1v-2h1z" fill="#ec70ec"/><path d="M1112 321h5v5h-5v-1.5h-1v-2h1z" fill="#ec70ec"/><path d="M1129 321h5v5h-5v-1.5h-1v-2h1z" fill="#ec70ec"/><path d="M1145 321h5v5h-5v-1.5h-1v-2h1z" fill="#ec70ec"/><path d="M1162 321h5v5h-5v-1.5h-1v-2h1z" fill="#ec70ec"/><path d="M1178 321h5v5h-5v-1.5h-1v-2h1z" fill="#ec70ec"/><path d="M1195 321h5v5h-5v-1.5h-1v-2h1z" fill="#ec70ec"/><path d="M1212 321h5v5h-5v-1.5h-1v-2h1z" fill="#ec70ec"/><path d="M879 337h5v5h-5v-1.5h-1v-2h1z" fill="#ec70ec"/><path d="M896 337h5v5h-5v-1.5h-1v-2h1z" fill="#ec70ec"/><path d="M912 337h5v5h-5v-1.5h-1v-2h1z" fill="#ec70ec"/><path d="M929 337h5v5h-5v-1.5h-1v-2h1z" fill="#ec70ec"/><path d="M945 337h5v5h-5v-1.5h-1v-2h1z" fill="#ec70ec"/><path d="M962 337h5v5h-5v-1.5h-1v-2h1z" fill="#ec70ec"/><path d="M979 337h5v5h-5v-1.5h-1v-2h1z" fill="#ec70ec"/><path d="M995 337h5v5h-5v-1.5h-1v-2h1z" fill="#ec70ec"/><path d="M1012 337h5v5h-5v-1.5h-1v-2h1z" fill="#ec70ec"/><path d="M1029 337h5v5h-5v-1.5h-1v-2h1z" fill="#ec70ec"/><path d="M1062 337h5v5h-5v-1.5h-1v-2h1z" fill="#ec70ec"/><path d="M1079 337h5v5h-5v-1.5h-1v-2h1z" fill="#ec70ec"/><path d="M1095 337h5v5h-5v-1.5h-1v-2h1z" fill="#ec70ec"/><path d="M1112 337h5v5h-5v-1.5h-1v-2h1z" fill="#ec70ec"/><path d="M1129 337h5v5h-5v-1.5h-1v-2h1z" fill="#ec70ec"/><path d="M1145 337h5v5h-5v-1.5h-1v-2h1z" fill="#ec70ec"/><path d="M1162 337h5v5h-5v-1.5h-1v-2h1z" fill="#ec70ec"/><path d="M1178 337h5v5h-5v-1.5h-1v-2h1z" fill="#ec70ec"/><path d="M1195 337h5v5h-5v-1.5h-1v-2h1z" fill="#ec70ec"/><path d="M1212 337h5v5h-5v-1.5h-1v-2h1z" fill="#ec70ec"/><path d="M879 354h5v5h-5v-1.5h-1v-2h1z" fill="#ec70ec"/><path d="M896 354h5v5h-5v-1.5h-1v-2h1z" fill="#ec70ec"/><path d="M912 354h5v5h-5v-1.5h-1v-2h1z" fill="#ec70ec"/><path d="M929 354h5v5h-5v-1.5h-1v-2h1z" fill="#ec70ec"/><path d="M945 354h5v5h-5v-1.5h-1v-2h1z" fill="#ec70ec"/><path d="M962 354h5v5h-5v-1.5h-1v-2h1z" fill="#ec70ec"/><path d="M979 354h5v5h-5v-1.5h-1v-2h1z" fill="#ec70ec"/><path d="M995 354h5v5h-5v-1.5h-1v-2h1z" fill="#ec70ec"/><path d="M1012 354h5v5h-5v-1.5h-1v-2h1z" fill="#ec70ec"/><path d="M1029 354h5v5h-5v-1.5h-1v-2h1z" fill="#ec70ec"/><path d="M1062 354h5v5h-5v-1.5h-1v-2h1z" fill="#ec70ec"/><path d="M1079 354h5v5h-5v-1.5h-1v-2h1z" fill="#ec70ec"/><path d="M1095 354h5v5h-5v-1.5h-1v-2h1z" fill="#ec70ec"/><path d="M1112 354h5v5h-5v-1.5h-1v-2h1z" fill="#ec70ec"/><path d="M1129 354h5v5h-5v-1.5h-1v-2h1z" fill="#ec70ec"/><path d="M1145 354h5v5h-5v-1.5h-1v-2h1z" fill="#ec70ec"/><path d="M1162 354h5v5h-5v-1.5h-1v-2h1z" fill="#ec70ec"/><path d="M1178 354h5v5h-5v-1.5h-1v-2h1z" fill="#ec70ec"/><path d="M1195 354h5v5h-5v-1.5h-1v-2h1z" fill="#ec70ec"/><path d="M1212 354h5v5h-5v-1.5h-1v-2h1z" fill="#ec70ec"/><path d="M879 371h5v5h-5v-1.5h-1v-2h1z" fill="#ec70ec"/><path d="M896 371h5v5h-5v-1.5h-1v-2h1z" fill="#ec70ec"/><path d="M912 371h5v5h-5v-1.5h-1v-2h1z" fill="#ec70ec"/><path d="M929 371h5v5h-5v-1.5h-1v-2h1z" fill="#ec70ec"/><path d="M945 371h5v5h-5v-1.5h-1v-2h1z" fill="#ec70ec"/><path d="M962 371h5v5h-5v-1.5h-1v-2h1z" fill="#ec70ec"/><path d="M979 371h5v5h-5v-1.5h-1v-2h1z" fill="#ec70ec"/><path d="M995 371h5v5h-5v-1.5h-1v-2h1z" fill="#ec70ec"/><path d="M1012 371h5v5h-5v-1.5h-1v-2h1z" fill="#ec70ec"/><path d="M1029 371h5v5h-5v-1.5h-1v-2h1z" fill="#ec70ec"/><path d="M1062 371h5v5h-5v-1.5h-1v-2h1z" fill="#ec70ec"/><path d="M1079 371h5v5h-5v-1.5h-1v-2h1z" fill="#ec70ec"/><path d="M1095 371h5v5h-5v-1.5h-1v-2h1z" fill="#ec70ec"/><path d="M1112 371h5v5h-5v-1.5h-1v-2h1z" fill="#ec70ec"/><path d="M1129 371h5v5h-5v-1.5h-1v-2h1z" fill="#ec70ec"/><path d="M1145 371h5v5h-5v-1.5h-1v-2h1z" fill="#ec70ec"/><path d="M1162 371h5v5h-5v-1.5h-1v-2h1z" fill="#ec70ec"/><path d="M1178 371h5v5h-5v-1.5h-1v-2h1z" fill="#ec70ec"/><path d="M1195 371h5v5h-5v-1.5h-1v-2h1z" fill="#ec70ec"/><path d="M1212 371h5v5h-5v-1.5h-1v-2h1z" fill="#ec70ec"/><path d="M879 387h5v5h-5v-1.5h-1v-2h1z" fill="#ec70ec"/><path d="M896 387h5v5h-5v-1.5h-1v-2h1z" fill="#ec70ec"/><path d="M912 387h5v5h-5v-1.5h-1v-2h1z" fill="#ec70ec"/><path d="M929 387h5v5h-5v-1.5h-1v-2h1z" fill="#ec70ec"/><path d="M945 387h5v5h-5v-1.5h-1v-2h1z" fill="#ec70ec"/><path d="M962 387h5v5h-5v-1.5h-1v-2h1z" fill="#e048e8"/><path d="M979 387h5v5h-5v-1.5h-1v-2h1z" fill="#e048e8"/><path d="M995 387h5v5h-5v-1.5h-1v-2h1z" fill="#dc40e8"/><path d="M1012 387h5v5h-5v-1.5h-1v-2h1z" fill="#dc40e8"/><path d="M1029 387h5v5h-5v-1.5h-1v-2h1z" fill="#dc40e8"/><path d="M1062 387h5v5h-5v-1.5h-1v-2h1z" fill="#dc40e8"/><path d="M1079 387h5v5h-5v-1.5h-1v-2h1z" fill="#dc40e8"/><path d="M1095 387h5v5h-5v-1.5h-1v-2h1z" fill="#e050e8"/><path d="M1112 387h5v5h-5v-1.5h-1v-2h1z" fill="#e860ec"/><path d="M1129 387h5v5h-5v-1.5h-1v-2h1z" fill="#ec70ec"/><path d="M1145 387h5v5h-5v-1.5h-1v-2h1z" fill="#ec70ec"/><path d="M1162 387h5v5h-5v-1.5h-1v-2h1z" fill="#ec70ec"/><path d="M1178 387h5v5h-5v-1.5h-1v-2h1z" fill="#ec70ec"/><path d="M1195 387h5v5h-5v-1.5h-1v-2h1z" fill="#ec70ec"/><path d="M1212 387h5v5h-5v-1.5h-1v-2h1z" fill="#ec70ec"/><path d="M879 404h5v5h-5v-1.5h-1v-2h1z" fill="#d020e8"/><path d="M896 404h5v5h-5v-1.5h-1v-2h1z" fill="#b01cd8"/><path d="M912 404h5v5h-5v-1.5h-1v-2h1z" fill="#8a14b4"/><path d="M929 404h5v5h-5v-1.5h-1v-2h1z" fill="#5c0c96"/><path d="M945 404h5v5h-5v-1.5h-1v-2h1z" fill="#4c0c9c"/><path d="M962 404h5v5h-5v-1.5h-1v-2h1z" fill="#400cac"/><path d="M979 404h5v5h-5v-1.5h-1v-2h1z" fill="#380cbc"/><path d="M995 404h5v5h-5v-1.5h-1v-2h1z" fill="#380cc0"/><path d="M1012 404h5v5h-5v-1.5h-1v-2h1z" fill="#380cc0"/><path d="M1029 404h5v5h-5v-1.5h-1v-2h1z" fill="#380cc0"/><path d="M1062 404h5v5h-5v-1.5h-1v-2h1z" fill="#3c0cc0"/><path d="M1079 404h5v5h-5v-1.5h-1v-2h1z" fill="#4c0ca8"/><path d="M1095 404h5v5h-5v-1.5h-1v-2h1z" fill="#64109c"/><path d="M1112 404h5v5h-5v-1.5h-1v-2h1z" fill="#9018c0"/><path d="M1129 404h5v5h-5v-1.5h-1v-2h1z" fill="#a018cc"/><path d="M1145 404h5v5h-5v-1.5h-1v-2h1z" fill="#b01cd8"/><path d="M1162 404h5v5h-5v-1.5h-1v-2h1z" fill="#b81ce0"/><path d="M1178 404h5v5h-5v-1.5h-1v-2h1z" fill="#c420e8"/><path d="M1195 404h5v5h-5v-1.5h-1v-2h1z" fill="#c820e8"/><path d="M1212 404h5v5h-5v-1.5h-1v-2h1z" fill="#cc24ec"/><path d="M879 421h5v5h-5v-1.5h-1v-2h1z" fill="#4c0c94"/><path d="M896 421h5v5h-5v-1.5h-1v-2h1z" fill="#440cac"/><path d="M912 421h5v5h-5v-1.5h-1v-2h1z" fill="#3c0cc4"/><path d="M929 421h5v5h-5v-1.5h-1v-2h1z" fill="#2c10dc"/><path d="M945 421h5v5h-5v-1.5h-1v-2h1z" fill="#0040f8"/><path d="M962 421h5v5h-5v-1.5h-1v-2h1z" fill="#00a050"/><path d="M979 421h5v5h-5v-1.5h-1v-2h1z" fill="#40b010"/><path d="M1112 421h5v5h-5v-1.5h-1v-2h1z" fill="#2810e8"/><path d="M1129 421h5v5h-5v-1.5h-1v-2h1z" fill="#4410c4"/><path d="M1145 421h5v5h-5v-1.5h-1v-2h1z" fill="#4c10b0"/><path d="M1162 421h5v5h-5v-1.5h-1v-2h1z" fill="#540ca0"/><path d="M1178 421h5v5h-5v-1.5h-1v-2h1z" fill="#5c0c98"/><path d="M1195 421h5v5h-5v-1.5h-1v-2h1z" fill="#740ca8"/><path d="M1212 421h5v5h-5v-1.5h-1v-2h1z" fill="#9814c4"/><path d="M879 437h5v5h-5v-1.5h-1v-2h1z" fill="#3c0cc4"/><path d="M896 437h5v5h-5v-1.5h-1v-2h1z" fill="#3410d4"/><path d="M912 437h5v5h-5v-1.5h-1v-2h1z" fill="#2810e8"/><path d="M929 437h5v5h-5v-1.5h-1v-2h1z" fill="#0838f4"/><path d="M945 437h5v5h-5v-1.5h-1v-2h1z" fill="#00b090"/><path d="M962 437h5v5h-5v-1.5h-1v-2h1z" fill="#88d010"/><path d="M979 437h5v5h-5v-1.5h-1v-2h1z" fill="#ff9000"/><path d="M1112 437h5v5h-5v-1.5h-1v-2h1z" fill="#0888d8"/><path d="M1129 437h5v5h-5v-1.5h-1v-2h1z" fill="#0808f8"/><path d="M1145 437h5v5h-5v-1.5h-1v-2h1z" fill="#2c10e0"/><path d="M1162 437h5v5h-5v-1.5h-1v-2h1z" fill="#3810cc"/><path d="M1178 437h5v5h-5v-1.5h-1v-2h1z" fill="#400cbc"/><path d="M1195 437h5v5h-5v-1.5h-1v-2h1z" fill="#440cb0"/><path d="M1212 437h5v5h-5v-1.5h-1v-2h1z" fill="#480ca4"/><path d="M879 454h5v5h-5v-1.5h-1v-2h1z" fill="#4c0c94"/><path d="M896 454h5v5h-5v-1.5h-1v-2h1z" fill="#440ca8"/><path d="M912 454h5v5h-5v-1.5h-1v-2h1z" fill="#3c0cc0"/><path d="M929 454h5v5h-5v-1.5h-1v-2h1z" fill="#3010d8"/><path d="M945 454h5v5h-5v-1.5h-1v-2h1z" fill="#0818f8"/><path d="M962 454h5v5h-5v-1.5h-1v-2h1z" fill="#00b8b8"/><path d="M979 454h5v5h-5v-1.5h-1v-2h1z" fill="#40b010"/><path d="M1112 454h5v5h-5v-1.5h-1v-2h1z" fill="#2010ec"/><path d="M1129 454h5v5h-5v-1.5h-1v-2h1z" fill="#3c10cc"/><path d="M1145 454h5v5h-5v-1.5h-1v-2h1z" fill="#4810b4"/><path d="M1162 454h5v5h-5v-1.5h-1v-2h1z" fill="#500ca4"/><path d="M1178 454h5v5h-5v-1.5h-1v-2h1z" fill="#580c98"/><path d="M1195 454h5v5h-5v-1.5h-1v-2h1z" fill="#6c0ca4"/><path d="M1212 454h5v5h-5v-1.5h-1v-2h1z" fill="#9414c0"/><path d="M879 471h5v5h-5v-1.5h-1v-2h1z" fill="#4c0c94"/><path d="M896 471h5v5h-5v-1.5h-1v-2h1z" fill="#440ca8"/><path d="M912 471h5v5h-5v-1.5h-1v-2h1z" fill="#400cb4"/><path d="M929 471h5v5h-5v-1.5h-1v-2h1z" fill="#3410d0"/><path d="M945 471h5v5h-5v-1.5h-1v-2h1z" fill="#1818f0"/><path d="M962 471h5v5h-5v-1.5h-1v-2h1z" fill="#0098d8"/><path d="M979 471h5v5h-5v-1.5h-1v-2h1z" fill="#50b810"/><path d="M1112 471h5v5h-5v-1.5h-1v-2h1z" fill="#2010ec"/><path d="M1129 471h5v5h-5v-1.5h-1v-2h1z" fill="#4010c8"/><path d="M1145 471h5v5h-5v-1.5h-1v-2h1z" fill="#500cac"/><path d="M1162 471h5v5h-5v-1.5h-1v-2h1z" fill="#5c0c98"/><path d="M1178 471h5v5h-5v-1.5h-1v-2h1z" fill="#680ca0"/><path d="M1195 471h5v5h-5v-1.5h-1v-2h1z" fill="#8010b4"/><path d="M1212 471h5v5h-5v-1.5h-1v-2h1z" fill="#9c14c8"/><path d="M879 487h5v5h-5v-1.5h-1v-2h1z" fill="#4c0c9c"/><path d="M896 487h5v5h-5v-1.5h-1v-2h1z" fill="#400cb4"/><path d="M912 487h5v5h-5v-1.5h-1v-2h1z" fill="#300cd4"/><path d="M929 487h5v5h-5v-1.5h-1v-2h1z" fill="#0808f8"/><path d="M945 487h5v5h-5v-1.5h-1v-2h1z" fill="#0898d0"/><path d="M962 487h5v5h-5v-1.5h-1v-2h1z" fill="#008810"/><path d="M979 487h5v5h-5v-1.5h-1v-2h1z" fill="#e8f010"/><path d="M1112 487h5v5h-5v-1.5h-1v-2h1z" fill="#0c0cf8"/><path d="M1129 487h5v5h-5v-1.5h-1v-2h1z" fill="#3010dc"/><path d="M1145 487h5v5h-5v-1.5h-1v-2h1z" fill="#4010c4"/><path d="M1162 487h5v5h-5v-1.5h-1v-2h1z" fill="#480cb0"/><path d="M1178 487h5v5h-5v-1.5h-1v-2h1z" fill="#4c0ca8"/><path d="M1195 487h5v5h-5v-1.5h-1v-2h1z" fill="#500ca0"/><path d="M1212 487h5v5h-5v-1.5h-1v-2h1z" fill="#580c9c"/><path d="M879 504h5v5h-5v-1.5h-1v-2h1z" fill="#480ca0"/><path d="M896 504h5v5h-5v-1.5h-1v-2h1z" fill="#3c0cbc"/><path d="M912 504h5v5h-5v-1.5h-1v-2h1z" fill="#2c0cdc"/><path d="M929 504h5v5h-5v-1.5h-1v-2h1z" fill="#0404fc"/><path d="M945 504h5v5h-5v-1.5h-1v-2h1z" fill="#00b8c8"/><path d="M962 504h5v5h-5v-1.5h-1v-2h1z" fill="#0c8c0c"/><path d="M979 504h5v5h-5v-1.5h-1v-2h1z" fill="#ffe400"/><path d="M1112 504h5v5h-5v-1.5h-1v-2h1z" fill="#0808f8"/><path d="M1129 504h5v5h-5v-1.5h-1v-2h1z" fill="#2c10e0"/><path d="M1145 504h5v5h-5v-1.5h-1v-2h1z" fill="#3c10c8"/><path d="M1162 504h5v5h-5v-1.5h-1v-2h1z" fill="#440cb4"/><path d="M1178 504h5v5h-5v-1.5h-1v-2h1z" fill="#480cac"/><path d="M1195 504h5v5h-5v-1.5h-1v-2h1z" fill="#4c0ca4"/><path d="M1212 504h5v5h-5v-1.5h-1v-2h1z" fill="#500c9c"/><path d="M879 520h5v5h-5v-1.5h-1v-2h1z" fill="#a014c8"/><path d="M896 520h5v5h-5v-1.5h-1v-2h1z" fill="#8810b4"/><path d="M912 520h5v5h-5v-1.5h-1v-2h1z" fill="#680ca0"/><path d="M929 520h5v5h-5v-1.5h-1v-2h1z" fill="#4c0c94"/><path d="M945 520h5v5h-5v-1.5h-1v-2h1z" fill="#440cb0"/><path d="M962 520h5v5h-5v-1.5h-1v-2h1z" fill="#1808e8"/><path d="M979 520h5v5h-5v-1.5h-1v-2h1z" fill="#0880d8"/><path d="M1112 520h5v5h-5v-1.5h-1v-2h1z" fill="#480ca8"/><path d="M1129 520h5v5h-5v-1.5h-1v-2h1z" fill="#5c0c9c"/><path d="M1145 520h5v5h-5v-1.5h-1v-2h1z" fill="#780cac"/><path d="M1162 520h5v5h-5v-1.5h-1v-2h1z" fill="#9010c0"/><path d="M1178 520h5v5h-5v-1.5h-1v-2h1z" fill="#a818d0"/><path d="M1195 520h5v5h-5v-1.5h-1v-2h1z" fill="#b81ce0"/><path d="M1212 520h5v5h-5v-1.5h-1v-2h1z" fill="#cc24ec"/><path d="M879 537h5v5h-5v-1.5h-1v-2h1z" fill="#e458e8"/><path d="M896 537h5v5h-5v-1.5h-1v-2h1z" fill="#e450e8"/><path d="M912 537h5v5h-5v-1.5h-1v-2h1z" fill="#e048e8"/><path d="M929 537h5v5h-5v-1.5h-1v-2h1z" fill="#dc40e8"/><path d="M945 537h5v5h-5v-1.5h-1v-2h1z" fill="#d030e4"/><path d="M962 537h5v5h-5v-1.5h-1v-2h1z" fill="#a818cc"/><path d="M979 537h5v5h-5v-1.5h-1v-2h1z" fill="#8810b0"/><path d="M995 537h5v5h-5v-1.5h-1v-2h1z" fill="#800cac"/><path d="M1012 537h5v5h-5v-1.5h-1v-2h1z" fill="#780ca8"/><path d="M1029 537h5v5h-5v-1.5h-1v-2h1z" fill="#700ca4"/><path d="M1062 537h5v5h-5v-1.5h-1v-2h1z" fill="#680ca0"/><path d="M1079 537h5v5h-5v-1.5h-1v-2h1z" fill="#8c10b8"/><path d="M1095 537h5v5h-5v-1.5h-1v-2h1z" fill="#b01cd8"/><path d="M1112 537h5v5h-5v-1.5h-1v-2h1z" fill="#c828e4"/><path d="M1129 537h5v5h-5v-1.5h-1v-2h1z" fill="#dc48e8"/><path d="M1145 537h5v5h-5v-1.5h-1v-2h1z" fill="#e458e8"/><path d="M1162 537h5v5h-5v-1.5h-1v-2h1z" fill="#e860ec"/><path d="M1178 537h5v5h-5v-1.5h-1v-2h1z" fill="#ec68ec"/><path d="M1195 537h5v5h-5v-1.5h-1v-2h1z" fill="#ec6cec"/><path d="M1212 537h5v5h-5v-1.5h-1v-2h1z" fill="#ec70ec"/><path d="M879 554h5v5h-5v-1.5h-1v-2h1z" fill="#ec70ec"/><path d="M896 554h5v5h-5v-1.5h-1v-2h1z" fill="#ec70ec"/><path d="M912 554h5v5h-5v-1.5h-1v-2h1z" fill="#ec70ec"/><path d="M929 554h5v5h-5v-1.5h-1v-2h1z" fill="#ec70ec"/><path d="M945 554h5v5h-5v-1.5h-1v-2h1z" fill="#ec70ec"/><path d="M962 554h5v5h-5v-1.5h-1v-2h1z" fill="#ec70ec"/><path d="M979 554h5v5h-5v-1.5h-1v-2h1z" fill="#ec70ec"/><path d="M995 554h5v5h-5v-1.5h-1v-2h1z" fill="#e458e8"/><path d="M1012 554h5v5h-5v-1.5h-1v-2h1z" fill="#e458e8"/><path d="M1029 554h5v5h-5v-1.5h-1v-2h1z" fill="#e458e8"/><path d="M1062 554h5v5h-5v-1.5h-1v-2h1z" fill="#e458e8"/><path d="M1079 554h5v5h-5v-1.5h-1v-2h1z" fill="#e860ec"/><path d="M1095 554h5v5h-5v-1.5h-1v-2h1z" fill="#ec70ec"/><path d="M1112 554h5v5h-5v-1.5h-1v-2h1z" fill="#ec70ec"/><path d="M1129 554h5v5h-5v-1.5h-1v-2h1z" fill="#ec70ec"/><path d="M1145 554h5v5h-5v-1.5h-1v-2h1z" fill="#ec70ec"/><path d="M1162 554h5v5h-5v-1.5h-1v-2h1z" fill="#ec70ec"/><path d="M1178 554h5v5h-5v-1.5h-1v-2h1z" fill="#ec70ec"/><path d="M1195 554h5v5h-5v-1.5h-1v-2h1z" fill="#ec70ec"/><path d="M1212 554h5v5h-5v-1.5h-1v-2h1z" fill="#ec70ec"/><path d="M879 570h5v5h-5v-1.5h-1v-2h1z" fill="#ec70ec"/><path d="M896 570h5v5h-5v-1.5h-1v-2h1z" fill="#ec70ec"/><path d="M912 570h5v5h-5v-1.5h-1v-2h1z" fill="#ec70ec"/><path d="M929 570h5v5h-5v-1.5h-1v-2h1z" fill="#ec70ec"/><path d="M945 570h5v5h-5v-1.5h-1v-2h1z" fill="#ec70ec"/><path d="M962 570h5v5h-5v-1.5h-1v-2h1z" fill="#ec70ec"/><path d="M979 570h5v5h-5v-1.5h-1v-2h1z" fill="#ec70ec"/><path d="M995 570h5v5h-5v-1.5h-1v-2h1z" fill="#ec70ec"/><path d="M1012 570h5v5h-5v-1.5h-1v-2h1z" fill="#ec70ec"/><path d="M1029 570h5v5h-5v-1.5h-1v-2h1z" fill="#ec70ec"/><path d="M1062 570h5v5h-5v-1.5h-1v-2h1z" fill="#ec70ec"/><path d="M1079 570h5v5h-5v-1.5h-1v-2h1z" fill="#ec70ec"/><path d="M1095 570h5v5h-5v-1.5h-1v-2h1z" fill="#ec70ec"/><path d="M1112 570h5v5h-5v-1.5h-1v-2h1z" fill="#ec70ec"/><path d="M1129 570h5v5h-5v-1.5h-1v-2h1z" fill="#ec70ec"/><path d="M1145 570h5v5h-5v-1.5h-1v-2h1z" fill="#ec70ec"/><path d="M1162 570h5v5h-5v-1.5h-1v-2h1z" fill="#ec70ec"/><path d="M1178 570h5v5h-5v-1.5h-1v-2h1z" fill="#ec70ec"/><path d="M1195 570h5v5h-5v-1.5h-1v-2h1z" fill="#ec70ec"/><path d="M1212 570h5v5h-5v-1.5h-1v-2h1z" fill="#ec70ec"/><path d="M879 587h5v5h-5v-1.5h-1v-2h1z" fill="#ec70ec"/><path d="M896 587h5v5h-5v-1.5h-1v-2h1z" fill="#ec70ec"/><path d="M912 587h5v5h-5v-1.5h-1v-2h1z" fill="#ec70ec"/><path d="M929 587h5v5h-5v-1.5h-1v-2h1z" fill="#ec70ec"/><path d="M945 587h5v5h-5v-1.5h-1v-2h1z" fill="#ec70ec"/><path d="M962 587h5v5h-5v-1.5h-1v-2h1z" fill="#ec70ec"/><path d="M979 587h5v5h-5v-1.5h-1v-2h1z" fill="#ec70ec"/><path d="M995 587h5v5h-5v-1.5h-1v-2h1z" fill="#ec70ec"/><path d="M1012 587h5v5h-5v-1.5h-1v-2h1z" fill="#ec70ec"/><path d="M1029 587h5v5h-5v-1.5h-1v-2h1z" fill="#ec70ec"/><path d="M1062 587h5v5h-5v-1.5h-1v-2h1z" fill="#ec70ec"/><path d="M1079 587h5v5h-5v-1.5h-1v-2h1z" fill="#ec70ec"/><path d="M1095 587h5v5h-5v-1.5h-1v-2h1z" fill="#ec70ec"/><path d="M1112 587h5v5h-5v-1.5h-1v-2h1z" fill="#ec70ec"/><path d="M1129 587h5v5h-5v-1.5h-1v-2h1z" fill="#ec70ec"/><path d="M1145 587h5v5h-5v-1.5h-1v-2h1z" fill="#ec70ec"/><path d="M1162 587h5v5h-5v-1.5h-1v-2h1z" fill="#ec70ec"/><path d="M1178 587h5v5h-5v-1.5h-1v-2h1z" fill="#ec70ec"/><path d="M1195 587h5v5h-5v-1.5h-1v-2h1z" fill="#ec70ec"/><path d="M1212 587h5v5h-5v-1.5h-1v-2h1z" fill="#ec70ec"/><path d="M879 604h5v5h-5v-1.5h-1v-2h1z" fill="#ec70ec"/><path d="M896 604h5v5h-5v-1.5h-1v-2h1z" fill="#ec70ec"/><path d="M912 604h5v5h-5v-1.5h-1v-2h1z" fill="#ec70ec"/><path d="M929 604h5v5h-5v-1.5h-1v-2h1z" fill="#ec70ec"/><path d="M945 604h5v5h-5v-1.5h-1v-2h1z" fill="#ec70ec"/><path d="M962 604h5v5h-5v-1.5h-1v-2h1z" fill="#ec70ec"/><path d="M979 604h5v5h-5v-1.5h-1v-2h1z" fill="#ec70ec"/><path d="M995 604h5v5h-5v-1.5h-1v-2h1z" fill="#ec70ec"/><path d="M1012 604h5v5h-5v-1.5h-1v-2h1z" fill="#ec70ec"/><path d="M1029 604h5v5h-5v-1.5h-1v-2h1z" fill="#ec70ec"/><path d="M1062 604h5v5h-5v-1.5h-1v-2h1z" fill="#ec70ec"/><path d="M1079 604h5v5h-5v-1.5h-1v-2h1z" fill="#ec70ec"/><path d="M1095 604h5v5h-5v-1.5h-1v-2h1z" fill="#ec70ec"/><path d="M1112 604h5v5h-5v-1.5h-1v-2h1z" fill="#ec70ec"/><path d="M1129 604h5v5h-5v-1.5h-1v-2h1z" fill="#ec70ec"/><path d="M1145 604h5v5h-5v-1.5h-1v-2h1z" fill="#ec70ec"/><path d="M1162 604h5v5h-5v-1.5h-1v-2h1z" fill="#ec70ec"/><path d="M1178 604h5v5h-5v-1.5h-1v-2h1z" fill="#ec70ec"/><path d="M1195 604h5v5h-5v-1.5h-1v-2h1z" fill="#ec70ec"/><path d="M1212 604h5v5h-5v-1.5h-1v-2h1z" fill="#ec70ec"/><path d="M879 620h5v5h-5v-1.5h-1v-2h1z" fill="#ec70ec"/><path d="M896 620h5v5h-5v-1.5h-1v-2h1z" fill="#ec70ec"/><path d="M912 620h5v5h-5v-1.5h-1v-2h1z" fill="#ec70ec"/><path d="M929 620h5v5h-5v-1.5h-1v-2h1z" fill="#ec70ec"/><path d="M945 620h5v5h-5v-1.5h-1v-2h1z" fill="#ec70ec"/><path d="M962 620h5v5h-5v-1.5h-1v-2h1z" fill="#ec70ec"/><path d="M979 620h5v5h-5v-1.5h-1v-2h1z" fill="#ec70ec"/><path d="M995 620h5v5h-5v-1.5h-1v-2h1z" fill="#ec70ec"/><path d="M1012 620h5v5h-5v-1.5h-1v-2h1z" fill="#ec70ec"/><path d="M1029 620h5v5h-5v-1.5h-1v-2h1z" fill="#ec70ec"/><path d="M1062 620h5v5h-5v-1.5h-1v-2h1z" fill="#ec70ec"/><path d="M1079 620h5v5h-5v-1.5h-1v-2h1z" fill="#ec70ec"/><path d="M1095 620h5v5h-5v-1.5h-1v-2h1z" fill="#ec70ec"/><path d="M1112 620h5v5h-5v-1.5h-1v-2h1z" fill="#ec70ec"/><path d="M1129 620h5v5h-5v-1.5h-1v-2h1z" fill="#ec70ec"/><path d="M1145 620h5v5h-5v-1.5h-1v-2h1z" fill="#ec70ec"/><path d="M1162 620h5v5h-5v-1.5h-1v-2h1z" fill="#ec70ec"/><path d="M1178 620h5v5h-5v-1.5h-1v-2h1z" fill="#ec70ec"/><path d="M1195 620h5v5h-5v-1.5h-1v-2h1z" fill="#ec70ec"/><path d="M1212 620h5v5h-5v-1.5h-1v-2h1z" fill="#ec70ec"/><path d="M879 637h5v5h-5v-1.5h-1v-2h1z" fill="#ec70ec"/><path d="M896 637h5v5h-5v-1.5h-1v-2h1z" fill="#ec70ec"/><path d="M912 637h5v5h-5v-1.5h-1v-2h1z" fill="#ec70ec"/><path d="M929 637h5v5h-5v-1.5h-1v-2h1z" fill="#ec70ec"/><path d="M945 637h5v5h-5v-1.5h-1v-2h1z" fill="#ec70ec"/><path d="M962 637h5v5h-5v-1.5h-1v-2h1z" fill="#ec70ec"/><path d="M979 637h5v5h-5v-1.5h-1v-2h1z" fill="#ec70ec"/><path d="M995 637h5v5h-5v-1.5h-1v-2h1z" fill="#ec70ec"/><path d="M1012 637h5v5h-5v-1.5h-1v-2h1z" fill="#ec70ec"/><path d="M1029 637h5v5h-5v-1.5h-1v-2h1z" fill="#ec70ec"/><path d="M1062 637h5v5h-5v-1.5h-1v-2h1z" fill="#ec70ec"/><path d="M1079 637h5v5h-5v-1.5h-1v-2h1z" fill="#ec70ec"/><path d="M1095 637h5v5h-5v-1.5h-1v-2h1z" fill="#ec70ec"/><path d="M1112 637h5v5h-5v-1.5h-1v-2h1z" fill="#ec70ec"/><path d="M1129 637h5v5h-5v-1.5h-1v-2h1z" fill="#ec70ec"/><path d="M1145 637h5v5h-5v-1.5h-1v-2h1z" fill="#ec70ec"/><path d="M1162 637h5v5h-5v-1.5h-1v-2h1z" fill="#ec70ec"/><path d="M1178 637h5v5h-5v-1.5h-1v-2h1z" fill="#ec70ec"/><path d="M1195 637h5v5h-5v-1.5h-1v-2h1z" fill="#ec70ec"/><path d="M1212 637h5v5h-5v-1.5h-1v-2h1z" fill="#ec70ec"/><path d="M995 421h5v5h-5v-1.5h-1v-2h1z" fill="#3cac10"/><path d="M1062 421h5v5h-5v-1.5h-1v-2h1z" fill="#40b010"/><path d="M1004 421h5v5h-5v-1.5h-1v-2h1z" fill="#3cac10"/><path d="M1070 421h5v5h-5v-1.5h-1v-2h1z" fill="#38a818"/><path d="M1012 421h5v5h-5v-1.5h-1v-2h1z" fill="#3cac10"/><path d="M1079 421h5v5h-5v-1.5h-1v-2h1z" fill="#10a048"/><path d="M1020 421h5v5h-5v-1.5h-1v-2h1z" fill="#3cac10"/><path d="M1087 421h5v5h-5v-1.5h-1v-2h1z" fill="#0890d8"/><path d="M1029 421h5v5h-5v-1.5h-1v-2h1z" fill="#3cac10"/><path d="M1095 421h5v5h-5v-1.5h-1v-2h1z" fill="#0840f8"/><path d="M995 429h5v5h-5v-1.5h-1v-2h1z" fill="#ffdc00"/><path d="M1062 429h5v5h-5v-1.5h-1v-2h1z" fill="#fff000"/><path d="M1004 429h5v5h-5v-1.5h-1v-2h1z" fill="#ffdc00"/><path d="M1070 429h5v5h-5v-1.5h-1v-2h1z" fill="#dcf010"/><path d="M1012 429h5v5h-5v-1.5h-1v-2h1z" fill="#ffdc00"/><path d="M1079 429h5v5h-5v-1.5h-1v-2h1z" fill="#40b010"/><path d="M1020 429h5v5h-5v-1.5h-1v-2h1z" fill="#ffdc00"/><path d="M1087 429h5v5h-5v-1.5h-1v-2h1z" fill="#10a850"/><path d="M1029 429h5v5h-5v-1.5h-1v-2h1z" fill="#ffdc00"/><path d="M1095 429h5v5h-5v-1.5h-1v-2h1z" fill="#00b8c0"/><path d="M995 437h5v5h-5v-1.5h-1v-2h1z" fill="#ff8000"/><path d="M1062 437h5v5h-5v-1.5h-1v-2h1z" fill="#ff9000"/><path d="M1004 437h5v5h-5v-1.5h-1v-2h1z" fill="#ff8000"/><path d="M1070 437h5v5h-5v-1.5h-1v-2h1z" fill="#ffb000"/><path d="M1012 437h5v5h-5v-1.5h-1v-2h1z" fill="#ff8000"/><path d="M1079 437h5v5h-5v-1.5h-1v-2h1z" fill="#88d010"/><path d="M1020 437h5v5h-5v-1.5h-1v-2h1z" fill="#ff8000"/><path d="M1087 437h5v5h-5v-1.5h-1v-2h1z" fill="#089010"/><path d="M1029 437h5v5h-5v-1.5h-1v-2h1z" fill="#ff8000"/><path d="M1095 437h5v5h-5v-1.5h-1v-2h1z" fill="#10a868"/><path d="M995 446h5v5h-5v-1.5h-1v-2h1z" fill="#ff9c00"/><path d="M1062 446h5v5h-5v-1.5h-1v-2h1z" fill="#ffb400"/><path d="M1004 446h5v5h-5v-1.5h-1v-2h1z" fill="#ff9c00"/><path d="M1070 446h5v5h-5v-1.5h-1v-2h1z" fill="#f8f808"/><path d="M1012 446h5v5h-5v-1.5h-1v-2h1z" fill="#ff9c00"/><path d="M1079 446h5v5h-5v-1.5h-1v-2h1z" fill="#40b010"/><path d="M1020 446h5v5h-5v-1.5h-1v-2h1z" fill="#ff9c00"/><path d="M1087 446h5v5h-5v-1.5h-1v-2h1z" fill="#10a040"/><path d="M1029 446h5v5h-5v-1.5h-1v-2h1z" fill="#ff9c00"/><path d="M1095 446h5v5h-5v-1.5h-1v-2h1z" fill="#00bcc0"/><path d="M995 454h5v5h-5v-1.5h-1v-2h1z" fill="#90d810"/><path d="M1062 454h5v5h-5v-1.5h-1v-2h1z" fill="#60c010"/><path d="M1004 454h5v5h-5v-1.5h-1v-2h1z" fill="#a8e010"/><path d="M1070 454h5v5h-5v-1.5h-1v-2h1z" fill="#109010"/><path d="M1012 454h5v5h-5v-1.5h-1v-2h1z" fill="#b8e810"/><path d="M1079 454h5v5h-5v-1.5h-1v-2h1z" fill="#10b090"/><path d="M1020 454h5v5h-5v-1.5h-1v-2h1z" fill="#c8ec10"/><path d="M1087 454h5v5h-5v-1.5h-1v-2h1z" fill="#0890d8"/><path d="M1029 454h5v5h-5v-1.5h-1v-2h1z" fill="#c8ec10"/><path d="M1095 454h5v5h-5v-1.5h-1v-2h1z" fill="#0838f8"/><path d="M995 462h5v5h-5v-1.5h-1v-2h1z" fill="#90d810"/><path d="M1062 462h5v5h-5v-1.5h-1v-2h1z" fill="#40b010"/><path d="M1004 462h5v5h-5v-1.5h-1v-2h1z" fill="#b8e810"/><path d="M1070 462h5v5h-5v-1.5h-1v-2h1z" fill="#10a040"/><path d="M1012 462h5v5h-5v-1.5h-1v-2h1z" fill="#d0f010"/><path d="M1079 462h5v5h-5v-1.5h-1v-2h1z" fill="#0898d8"/><path d="M1020 462h5v5h-5v-1.5h-1v-2h1z" fill="#d0f010"/><path d="M1087 462h5v5h-5v-1.5h-1v-2h1z" fill="#0848f8"/><path d="M1029 462h5v5h-5v-1.5h-1v-2h1z" fill="#c8ec10"/><path d="M1095 462h5v5h-5v-1.5h-1v-2h1z" fill="#0810f8"/><path d="M995 471h5v5h-5v-1.5h-1v-2h1z" fill="#ffe800"/><path d="M1062 471h5v5h-5v-1.5h-1v-2h1z" fill="#b0e010"/><path d="M1004 471h5v5h-5v-1.5h-1v-2h1z" fill="#ffc800"/><path d="M1070 471h5v5h-5v-1.5h-1v-2h1z" fill="#089010"/><path d="M1012 471h5v5h-5v-1.5h-1v-2h1z" fill="#ffc400"/><path d="M1079 471h5v5h-5v-1.5h-1v-2h1z" fill="#10b090"/><path d="M1020 471h5v5h-5v-1.5h-1v-2h1z" fill="#ffc400"/><path d="M1087 471h5v5h-5v-1.5h-1v-2h1z" fill="#0898d8"/><path d="M1029 471h5v5h-5v-1.5h-1v-2h1z" fill="#ffc000"/><path d="M1095 471h5v5h-5v-1.5h-1v-2h1z" fill="#0840f8"/><path d="M995 479h5v5h-5v-1.5h-1v-2h1z" fill="#ffe000"/><path d="M1062 479h5v5h-5v-1.5h-1v-2h1z" fill="#e8f010"/><path d="M1004 479h5v5h-5v-1.5h-1v-2h1z" fill="#ffd000"/><path d="M1070 479h5v5h-5v-1.5h-1v-2h1z" fill="#30a810"/><path d="M1012 479h5v5h-5v-1.5h-1v-2h1z" fill="#ffcc00"/><path d="M1079 479h5v5h-5v-1.5h-1v-2h1z" fill="#10a048"/><path d="M1020 479h5v5h-5v-1.5h-1v-2h1z" fill="#ffcc00"/><path d="M1087 479h5v5h-5v-1.5h-1v-2h1z" fill="#00bcc8"/><path d="M1029 479h5v5h-5v-1.5h-1v-2h1z" fill="#ffc800"/><path d="M1095 479h5v5h-5v-1.5h-1v-2h1z" fill="#0850f0"/><path d="M995 487h5v5h-5v-1.5h-1v-2h1z" fill="#ffa800"/><path d="M1062 487h5v5h-5v-1.5h-1v-2h1z" fill="#ffd000"/><path d="M1004 487h5v5h-5v-1.5h-1v-2h1z" fill="#ffa000"/><path d="M1070 487h5v5h-5v-1.5h-1v-2h1z" fill="#a8e010"/><path d="M1012 487h5v5h-5v-1.5h-1v-2h1z" fill="#ffa000"/><path d="M1079 487h5v5h-5v-1.5h-1v-2h1z" fill="#089010"/><path d="M1020 487h5v5h-5v-1.5h-1v-2h1z" fill="#ffa000"/><path d="M1087 487h5v5h-5v-1.5h-1v-2h1z" fill="#10a868"/><path d="M1029 487h5v5h-5v-1.5h-1v-2h1z" fill="#ffa000"/><path d="M1095 487h5v5h-5v-1.5h-1v-2h1z" fill="#0898d8"/><path d="M995 496h5v5h-5v-1.5h-1v-2h1z" fill="#ff8800"/><path d="M1062 496h5v5h-5v-1.5h-1v-2h1z" fill="#ff9800"/><path d="M1004 496h5v5h-5v-1.5h-1v-2h1z" fill="#ff8800"/><path d="M1070 496h5v5h-5v-1.5h-1v-2h1z" fill="#ffc000"/><path d="M1012 496h5v5h-5v-1.5h-1v-2h1z" fill="#ff8800"/><path d="M1079 496h5v5h-5v-1.5h-1v-2h1z" fill="#80d010"/><path d="M1020 496h5v5h-5v-1.5h-1v-2h1z" fill="#ff8800"/><path d="M1087 496h5v5h-5v-1.5h-1v-2h1z" fill="#089010"/><path d="M1029 496h5v5h-5v-1.5h-1v-2h1z" fill="#ff8800"/><path d="M1095 496h5v5h-5v-1.5h-1v-2h1z" fill="#10b0a0"/><path d="M995 504h5v5h-5v-1.5h-1v-2h1z" fill="#ffb800"/><path d="M1062 504h5v5h-5v-1.5h-1v-2h1z" fill="#ffc000"/><path d="M1004 504h5v5h-5v-1.5h-1v-2h1z" fill="#ffb800"/><path d="M1070 504h5v5h-5v-1.5h-1v-2h1z" fill="#fff000"/><path d="M1012 504h5v5h-5v-1.5h-1v-2h1z" fill="#ffb800"/><path d="M1079 504h5v5h-5v-1.5h-1v-2h1z" fill="#40b010"/><path d="M1020 504h5v5h-5v-1.5h-1v-2h1z" fill="#ffb800"/><path d="M1087 504h5v5h-5v-1.5h-1v-2h1z" fill="#109030"/><path d="M1029 504h5v5h-5v-1.5h-1v-2h1z" fill="#ffb800"/><path d="M1095 504h5v5h-5v-1.5h-1v-2h1z" fill="#0898d0"/><path d="M995 512h5v5h-5v-1.5h-1v-2h1z" fill="#109010"/><path d="M1062 512h5v5h-5v-1.5h-1v-2h1z" fill="#109010"/><path d="M1004 512h5v5h-5v-1.5h-1v-2h1z" fill="#109010"/><path d="M1070 512h5v5h-5v-1.5h-1v-2h1z" fill="#089010"/><path d="M1012 512h5v5h-5v-1.5h-1v-2h1z" fill="#109010"/><path d="M1079 512h5v5h-5v-1.5h-1v-2h1z" fill="#10b8a0"/><path d="M1020 512h5v5h-5v-1.5h-1v-2h1z" fill="#109010"/><path d="M1087 512h5v5h-5v-1.5h-1v-2h1z" fill="#0850f0"/><path d="M1029 512h5v5h-5v-1.5h-1v-2h1z" fill="#109010"/><path d="M1095 512h5v5h-5v-1.5h-1v-2h1z" fill="#0808f4"/><path d="M995 520h5v5h-5v-1.5h-1v-2h1z" fill="#0884d8"/><path d="M1062 520h5v5h-5v-1.5h-1v-2h1z" fill="#0890d8"/><path d="M1004 520h5v5h-5v-1.5h-1v-2h1z" fill="#0884d8"/><path d="M1070 520h5v5h-5v-1.5h-1v-2h1z" fill="#0880e0"/><path d="M1012 520h5v5h-5v-1.5h-1v-2h1z" fill="#0884d8"/><path d="M1079 520h5v5h-5v-1.5h-1v-2h1z" fill="#0808f8"/><path d="M1020 520h5v5h-5v-1.5h-1v-2h1z" fill="#0884d8"/><path d="M1087 520h5v5h-5v-1.5h-1v-2h1z" fill="#2c10dc"/><path d="M1029 520h5v5h-5v-1.5h-1v-2h1z" fill="#0884d8"/><path d="M1095 520h5v5h-5v-1.5h-1v-2h1z" fill="#3c10c4"/></g><rect x="1045.4" y="282" width="5.8" height="382" fill="#ec70ec"/><g filter="url(#fBlurY)"><rect x="1045.4" y="401" width="5.8" height="9" fill="#3810c0"/><rect x="1045.4" y="410" width="5.8" height="6" fill="#6a10a8"/><rect x="1045.4" y="416" width="5.8" height="4" fill="#1840d8"/><rect x="1045.4" y="420" width="5.8" height="8" fill="#28a828"/><rect x="1045.4" y="428" width="5.8" height="2" fill="#f0c010"/><rect x="1045.4" y="430" width="5.8" height="5" fill="#20a020"/><rect x="1045.4" y="435" width="5.8" height="9" fill="#c8d820"/><rect x="1045.4" y="444" width="5.8" height="3" fill="#1030e8"/><rect x="1045.4" y="447" width="5.8" height="4" fill="#20a030"/><rect x="1045.4" y="451" width="5.8" height="2" fill="#6010a0"/><rect x="1045.4" y="453" width="5.8" height="7" fill="#10c0c0"/><rect x="1045.4" y="460" width="5.8" height="2" fill="#2030c0"/><rect x="1045.4" y="462" width="5.8" height="5" fill="#1050f0"/><rect x="1045.4" y="467" width="5.8" height="3" fill="#300860"/><rect x="1045.4" y="470" width="5.8" height="5" fill="#10a070"/><rect x="1045.4" y="475" width="5.8" height="3" fill="#300860"/><rect x="1045.4" y="478" width="5.8" height="6" fill="#10c0b8"/><rect x="1045.4" y="484" width="5.8" height="2" fill="#3020c0"/><rect x="1045.4" y="486" width="5.8" height="7" fill="#30a828"/><rect x="1045.4" y="493" width="5.8" height="2" fill="#c07010"/><rect x="1045.4" y="495" width="5.8" height="5" fill="#28a028"/><rect x="1045.4" y="500" width="5.8" height="2" fill="#2030d0"/><rect x="1045.4" y="502" width="5.8" height="6" fill="#50b020"/><rect x="1045.4" y="508" width="5.8" height="2" fill="#f0c010"/><rect x="1045.4" y="510" width="5.8" height="8" fill="#1090e0"/><rect x="1045.4" y="518" width="5.8" height="9" fill="#1030f0"/><rect x="1045.4" y="527" width="5.8" height="3" fill="#e060e8"/><rect x="1045.4" y="530" width="5.8" height="11" fill="#b020d0"/><rect x="1045.4" y="541" width="5.8" height="5" fill="#8010a8"/></g><path d="M1048.5 262 V684" stroke="#a010a0" stroke-width="1.1"/><path d="M679 464.5 H1420" stroke="#fff" stroke-width="1" stroke-dasharray="4 1.4" shape-rendering="crispEdges"/><path d="M683 529.5 H1416" stroke="#fff" stroke-width="1" stroke-dasharray="4 1.4" shape-rendering="crispEdges"/><path d="M715.5 313.5 V634.5" stroke="#fff" stroke-width="1" stroke-dasharray="4 1.4" shape-rendering="crispEdges"/><path d="M1380.5 313.5 V634.5" stroke="#fff" stroke-width="1" stroke-dasharray="4 1.4" shape-rendering="crispEdges"/></svg>
<span class="t l" style="left:674.00px;top:97.00px;font-size:12.5px;line-height:14px;transform:scaleX(0.8787);transform-origin:0 0;color:#fff;">0°</span>
<!-- sec_right -->
<div style="left:1814px;top:72px;width:106px;height:1088px;background:#fbfbfb;"></div>
<div style="left:1815px;top:76px;width:105px;height:361px;background:linear-gradient(90deg,#fbfbfb 0,#f7f7f7 50%,#eeeeee 100%);border-radius:0 0 5px 0"></div>
<div style="left:1815px;top:77px;width:103px;height:1px;background:#d4d4d4;"></div>
<div style="left:1815px;top:78px;width:103px;height:1px;background:#fff;"></div>
<span class="t l" style="left:1822.00px;top:78.00px;font-size:12px;line-height:14px;letter-spacing:-0.272px;">Measured Data</span>
<svg style="left:1908px;top:84px" width="7" height="4" viewBox="0 0 7 4"><path d="M0 0 H7 L3.5 3.6Z" fill="#000"/></svg>
<div style="left:1818px;top:101px;width:11px;height:65px;background:linear-gradient(180deg,#ff0000 0,#ff2800 8%,#ff7800 22%,#ffb000 29%,#ffff00 35%,#80c800 42%,#008000 51%,#00a080 58%,#0060e0 63%,#0000ff 68%,#3000c0 78%,#400080 86%,#a020d0 93%,#f070f0 100%);"></div>
<span class="t l" style="left:1832.00px;top:102.00px;font-size:12px;line-height:14px;letter-spacing:-0.541px;">3.0000 Gy</span>
<span class="t l" style="left:1832.00px;top:153.00px;font-size:12px;line-height:14px;letter-spacing:-0.541px;">0.0000 Gy</span>
<div style="left:1818px;top:170px;width:99px;height:23px;background:#fff;box-shadow:inset 0 0 0 1px #0078d7"></div>
<div style="left:1821px;top:173px;width:76px;height:17px;background:#0078d7;"></div>
<span class="t l" style="left:1822.50px;top:175.00px;font-size:12px;line-height:14px;letter-spacing:-0.263px;color:#fff;">Abs. dose</span>
<div style="left:1904px;top:171px;width:12px;height:21px;background:#b8d8f4;box-shadow:-1px 0 0 #0078d7"></div>
<svg style="left:1907px;top:180px" width="7" height="4" viewBox="0 0 7 4"><path d="M0 0 H7 L3.5 3.6Z" fill="#000"/></svg>
<div style="left:1815px;top:195px;width:103px;height:1px;background:#d4d4d4;"></div>
<div style="left:1815px;top:196px;width:103px;height:1px;background:#fff;"></div>
<span class="t l" style="left:1839.00px;top:197.00px;font-size:12px;line-height:14px;letter-spacing:-0.378px;">Isodoses</span>
<svg style="left:1908px;top:202px" width="7" height="4" viewBox="0 0 7 4"><path d="M0 0 H7 L3.5 3.6Z" fill="#000"/></svg>
<span class="t l" style="left:1885.85px;top:219.00px;font-size:12px;line-height:14px;letter-spacing:-0.25px;">10 %</span>
<span class="t l" style="left:1885.85px;top:241.00px;font-size:12px;line-height:14px;letter-spacing:-0.25px;">20 %</span>
<span class="t l" style="left:1885.85px;top:263.00px;font-size:12px;line-height:14px;letter-spacing:-0.25px;">30 %</span>
<span class="t l" style="left:1885.85px;top:285.00px;font-size:12px;line-height:14px;letter-spacing:-0.25px;">40 %</span>
<span class="t l" style="left:1885.85px;top:307.00px;font-size:12px;line-height:14px;letter-spacing:-0.25px;">50 %</span>
<span class="t l" style="left:1885.85px;top:329.00px;font-size:12px;line-height:14px;letter-spacing:-0.25px;">60 %</span>
<span class="t l" style="left:1885.85px;top:351.00px;font-size:12px;line-height:14px;letter-spacing:-0.25px;">70 %</span>
<span class="t l" style="left:1885.85px;top:373.00px;font-size:12px;line-height:14px;letter-spacing:-0.25px;">80 %</span>
<span class="t l" style="left:1885.85px;top:395.00px;font-size:12px;line-height:14px;letter-spacing:-0.25px;">90 %</span>
<div style="left:1815px;top:415px;width:103px;height:1px;background:#d4d4d4;"></div>
<div style="left:1815px;top:416px;width:103px;height:1px;background:#fff;"></div>
<span class="t l" style="left:1835.30px;top:417.00px;font-size:12px;line-height:14px;letter-spacing:-0.198px;">Structures</span>
<svg style="left:1908px;top:422px" width="7" height="4" viewBox="0 0 7 4"><path d="M0 0 H7 L3.5 3.6Z" fill="#000"/></svg>
<div style="left:1818px;top:436px;width:98px;height:1px;background:#ededed;"></div>
<!-- sec_charts -->
<div style="left:281px;top:854px;width:1533px;height:281px;background:#fbfbfb;"></div>
<div style="left:285px;top:859px;width:1527px;height:273px;background:#fff;box-shadow:inset 1px 0 0 #dcdcdc, inset -1px -1px 0 #dcdcdc"></div>
<div style="left:286px;top:859px;width:1525px;height:23px;background:#fcfcfc;"></div>
<div style="left:286px;top:881px;width:1525px;height:1px;background:#e2e2e2;"></div>
<div style="left:289px;top:883px;width:1520px;height:246px;background:linear-gradient(180deg,#fafafa,#f0f0f0);"></div>
<div style="left:2px;top:1133px;width:1812px;height:1px;background:#e6e6e6;"></div>
<div style="left:285px;top:859px;width:87px;height:24px;background:#fff;box-shadow:inset 1px 1px 0 #dcdcdc, inset -1px 0 0 #dcdcdc"></div>
<div style="left:372px;top:861px;width:112px;height:20px;background:#f0f0f0;box-shadow:inset 0 0 0 1px #d9d9d9"></div>
<span class="t l" style="left:293.00px;top:863.00px;font-size:12.5px;line-height:14px;transform:scaleX(0.8301);transform-origin:0 0;">Beam Statistics</span>
<span class="t l" style="left:377.00px;top:865.00px;font-size:12.5px;line-height:14px;transform:scaleX(0.8465);transform-origin:0 0;">MLC Leaf Movements</span>
<svg class="d" style="left:285px;top:883px" width="1527" height="247" viewBox="285 883 1527 247"><defs><linearGradient id="gPlot" x1="0" y1="0" x2="0" y2="1"><stop offset="0" stop-color="#eaeaea"/><stop offset="1" stop-color="#d2d2d2"/></linearGradient><clipPath id="cp347"><rect x="348" y="915" width="432" height="169.5"/></clipPath><clipPath id="cp854"><rect x="855" y="915" width="432" height="169.5"/></clipPath><clipPath id="cp1360"><rect x="1361" y="915" width="432" height="169.5"/></clipPath></defs><rect x="347" y="915" width="433" height="169.5" fill="url(#gPlot)"/><path d="M395.4 915 V1084.5 M479.9 915 V1084.5 M564.4 915 V1084.5 M648.9 915 V1084.5 M733.4 915 V1084.5 M347 1056.2 H780 M347 1028.0 H780 M347 999.8 H780 M347 971.5 H780 M347 943.2 H780" stroke="#989898" stroke-width="1" stroke-dasharray="3 2" fill="none" shape-rendering="crispEdges"/><g clip-path="url(#cp347)"><rect x="354.3" y="858.5" width="14.6" height="228.0" fill="#ff0000" stroke="#b00000" stroke-width="0.9"/><rect x="388.1" y="1064.8" width="14.6" height="21.7" fill="#0000ff" stroke="#000078" stroke-width="0.9"/><rect x="405.0" y="1068.3" width="14.6" height="18.2" fill="#0000ff" stroke="#000078" stroke-width="0.9"/><rect x="421.9" y="1064.8" width="14.6" height="21.7" fill="#0000ff" stroke="#000078" stroke-width="0.9"/><rect x="438.8" y="1067.1" width="14.6" height="19.4" fill="#0000ff" stroke="#000078" stroke-width="0.9"/><rect x="455.7" y="1068.3" width="14.6" height="18.2" fill="#0000ff" stroke="#000078" stroke-width="0.9"/><rect x="472.6" y="1061.3" width="14.6" height="25.2" fill="#0000ff" stroke="#000078" stroke-width="0.9"/><rect x="489.5" y="1048.5" width="14.6" height="38.0" fill="#0000ff" stroke="#000078" stroke-width="0.9"/><rect x="506.4" y="1061.3" width="14.6" height="25.2" fill="#0000ff" stroke="#000078" stroke-width="0.9"/><rect x="523.3" y="1056.6" width="14.6" height="29.9" fill="#0000ff" stroke="#000078" stroke-width="0.9"/><rect x="540.2" y="1060.1" width="14.6" height="26.4" fill="#0000ff" stroke="#000078" stroke-width="0.9"/><rect x="557.1" y="1071.7" width="14.6" height="14.8" fill="#0000ff" stroke="#000078" stroke-width="0.9"/><rect x="574.0" y="1075.2" width="14.6" height="11.3" fill="#0000ff" stroke="#000078" stroke-width="0.9"/><rect x="590.9" y="1063.0" width="14.6" height="23.5" fill="#0000ff" stroke="#000078" stroke-width="0.9"/><rect x="607.8" y="1070.0" width="14.6" height="16.5" fill="#0000ff" stroke="#000078" stroke-width="0.9"/><rect x="624.7" y="1070.9" width="14.6" height="15.6" fill="#0000ff" stroke="#000078" stroke-width="0.9"/><rect x="641.6" y="1081.0" width="14.6" height="5.5" fill="#0000ff" stroke="#000078" stroke-width="0.9"/><rect x="658.5" y="1076.1" width="14.6" height="10.4" fill="#0000ff" stroke="#000078" stroke-width="0.9"/><rect x="675.4" y="1071.7" width="14.6" height="14.8" fill="#0000ff" stroke="#000078" stroke-width="0.9"/><rect x="692.3" y="1083.4" width="14.6" height="3.1" fill="#0000ff" stroke="#000078" stroke-width="0.9"/><rect x="709.2" y="1078.7" width="14.6" height="7.8" fill="#0000ff" stroke="#000078" stroke-width="0.9"/><rect x="726.1" y="1077.7" width="14.6" height="8.8" fill="#0000ff" stroke="#000078" stroke-width="0.9"/><rect x="759.9" y="1012.5" width="14.6" height="74.0" fill="#ff0000" stroke="#b00000" stroke-width="0.9"/></g><path d="M513.7 915 V1084.5" stroke="#ff0000" stroke-width="1" stroke-dasharray="3 1" shape-rendering="crispEdges"/><path d="M615.1 915 V1084.5" stroke="#ff0000" stroke-width="1" stroke-dasharray="3 1" shape-rendering="crispEdges"/><path d="M347 915.5 H780.5 V1084.5" fill="none" stroke="#111" stroke-width="1.2"/><path d="M348 915 V1085.5 H781" fill="none" stroke="#3c3c3c" stroke-width="2.2"/><text x="395.40" y="1102.00" font-size="11" text-anchor="middle" fill="#000" letter-spacing="0.2" >-10</text><text x="479.90" y="1102.00" font-size="11" text-anchor="middle" fill="#000" letter-spacing="0.2" >-5</text><text x="564.40" y="1102.00" font-size="11" text-anchor="middle" fill="#000" letter-spacing="0.2" >0</text><text x="648.90" y="1102.00" font-size="11" text-anchor="middle" fill="#000" letter-spacing="0.2" >5</text><text x="733.40" y="1102.00" font-size="11" text-anchor="middle" fill="#000" letter-spacing="0.2" >10</text><text x="337.40" y="1088.50" font-size="11" text-anchor="end" fill="#000" letter-spacing="0.2" >0</text><text x="337.40" y="1060.25" font-size="11" text-anchor="end" fill="#000" letter-spacing="0.2" >5</text><text x="337.40" y="1032.00" font-size="11" text-anchor="end" fill="#000" letter-spacing="0.2" >10</text><text x="337.40" y="1003.75" font-size="11" text-anchor="end" fill="#000" letter-spacing="0.2" >15</text><text x="337.40" y="975.50" font-size="11" text-anchor="end" fill="#000" letter-spacing="0.2" >20</text><text x="337.40" y="947.25" font-size="11" text-anchor="end" fill="#000" letter-spacing="0.2" >25</text><text x="337.40" y="919.00" font-size="11" text-anchor="end" fill="#000" letter-spacing="0.2" >30</text><path d="M395.4 1086.5 v5 M479.9 1086.5 v5 M564.4 1086.5 v5 M648.9 1086.5 v5 M733.4 1086.5 v5 M353.1 1086.5 v3 M374.3 1086.5 v3 M416.5 1086.5 v3 M437.6 1086.5 v3 M458.8 1086.5 v3 M501.0 1086.5 v3 M522.1 1086.5 v3 M543.3 1086.5 v3 M585.5 1086.5 v3 M606.6 1086.5 v3 M627.8 1086.5 v3 M670.0 1086.5 v3 M691.1 1086.5 v3 M712.3 1086.5 v3 M754.5 1086.5 v3 M775.6 1086.5 v3 M346 1084.5 h-5 M346 1056.2 h-5 M346 1028.0 h-5 M346 999.8 h-5 M346 971.5 h-5 M346 943.2 h-5 M346 915.0 h-5 M346 1084.5 h-3 M346 1077.4 h-3 M346 1070.4 h-3 M346 1063.3 h-3 M346 1056.2 h-3 M346 1049.2 h-3 M346 1042.1 h-3 M346 1035.1 h-3 M346 1028.0 h-3 M346 1020.9 h-3 M346 1013.9 h-3 M346 1006.8 h-3 M346 999.8 h-3 M346 992.7 h-3 M346 985.6 h-3 M346 978.6 h-3 M346 971.5 h-3 M346 964.4 h-3 M346 957.4 h-3 M346 950.3 h-3 M346 943.2 h-3 M346 936.2 h-3 M346 929.1 h-3 M346 922.1 h-3 M346 915.0 h-3" stroke="#9a9a9a" stroke-width="1" fill="none"/><text x="453.40" y="904.00" font-size="11" text-anchor="start" fill="#200890" textLength="172.3" lengthAdjust="spacing" >19.5% within ±3.0% deviation</text><text x="508.50" y="1115.50" font-size="11" text-anchor="start" fill="#000" textLength="111.5" lengthAdjust="spacing" >Dose Deviation [%]</text><text x="314.5" y="1060.3" font-size="11" text-anchor="start" textLength="124.6" lengthAdjust="spacing" transform="rotate(-90 314.5 1060.3)">Frequency [% of 487]</text><text x="686.40" y="926.00" font-size="11" text-anchor="start" fill="#000" textLength="92.9" lengthAdjust="spacing" >median = -4.3%</text><use href="#iMax" x="781" y="887" width="13" height="13"/><rect x="854" y="915" width="433" height="169.5" fill="url(#gPlot)"/><path d="M859.6 915 V1084.5 M933.3 915 V1084.5 M1007.0 915 V1084.5 M1080.8 915 V1084.5 M1154.5 915 V1084.5 M1228.2 915 V1084.5 M854 1060.4 H1287 M854 1036.2 H1287 M854 1012.1 H1287 M854 987.9 H1287 M854 963.8 H1287 M854 939.7 H1287" stroke="#989898" stroke-width="1" stroke-dasharray="3 2" fill="none" shape-rendering="crispEdges"/><g clip-path="url(#cp854)"><rect x="861.6" y="952.9" width="14.4" height="133.6" fill="#0000ff" stroke="#000078" stroke-width="0.9"/><rect x="880.0" y="981.9" width="14.4" height="104.6" fill="#0000ff" stroke="#000078" stroke-width="0.9"/><rect x="898.5" y="1001.2" width="14.4" height="85.3" fill="#0000ff" stroke="#000078" stroke-width="0.9"/><rect x="916.9" y="986.7" width="14.4" height="99.8" fill="#0000ff" stroke="#000078" stroke-width="0.9"/><rect x="935.3" y="843.1" width="14.4" height="243.4" fill="#0000ff" stroke="#000078" stroke-width="0.9"/><rect x="953.8" y="991.6" width="14.4" height="94.9" fill="#0000ff" stroke="#000078" stroke-width="0.9"/><rect x="972.2" y="1009.1" width="14.4" height="77.4" fill="#0000ff" stroke="#000078" stroke-width="0.9"/><rect x="990.6" y="1043.5" width="14.4" height="43.0" fill="#0000ff" stroke="#000078" stroke-width="0.9"/><rect x="1009.1" y="1006.0" width="14.4" height="80.5" fill="#0000ff" stroke="#000078" stroke-width="0.9"/><rect x="1027.5" y="965.0" width="14.4" height="121.5" fill="#0000ff" stroke="#000078" stroke-width="0.9"/><rect x="1045.9" y="1027.8" width="14.4" height="58.7" fill="#0000ff" stroke="#000078" stroke-width="0.9"/><rect x="1064.3" y="1031.4" width="14.4" height="55.1" fill="#0000ff" stroke="#000078" stroke-width="0.9"/><rect x="1082.8" y="1035.0" width="14.4" height="51.5" fill="#0000ff" stroke="#000078" stroke-width="0.9"/><rect x="1101.2" y="1038.0" width="14.4" height="48.5" fill="#0000ff" stroke="#000078" stroke-width="0.9"/><rect x="1119.6" y="1077.3" width="14.4" height="9.2" fill="#0000ff" stroke="#000078" stroke-width="0.9"/><rect x="1138.1" y="1082.1" width="14.4" height="4.4" fill="#0000ff" stroke="#000078" stroke-width="0.9"/><rect x="1156.5" y="1082.1" width="14.4" height="4.4" fill="#0000ff" stroke="#000078" stroke-width="0.9"/></g><path d="M970.2 915 V1084.5" stroke="#ff0000" stroke-width="1" stroke-dasharray="3 1" shape-rendering="crispEdges"/><path d="M854 915.5 H1287.5 V1084.5" fill="none" stroke="#111" stroke-width="1.2"/><path d="M855 915 V1085.5 H1288" fill="none" stroke="#3c3c3c" stroke-width="2.2"/><text x="859.60" y="1102.00" font-size="11" text-anchor="middle" fill="#000" letter-spacing="0.2" >0</text><text x="933.32" y="1102.00" font-size="11" text-anchor="middle" fill="#000" letter-spacing="0.2" >2</text><text x="1007.04" y="1102.00" font-size="11" text-anchor="middle" fill="#000" letter-spacing="0.2" >4</text><text x="1080.76" y="1102.00" font-size="11" text-anchor="middle" fill="#000" letter-spacing="0.2" >6</text><text x="1154.48" y="1102.00" font-size="11" text-anchor="middle" fill="#000" letter-spacing="0.2" >8</text><text x="1228.20" y="1102.00" font-size="11" text-anchor="middle" fill="#000" letter-spacing="0.2" >10</text><text x="844.40" y="1088.50" font-size="11" text-anchor="end" fill="#000" letter-spacing="0.2" >0</text><text x="844.40" y="1064.36" font-size="11" text-anchor="end" fill="#000" letter-spacing="0.2" >2</text><text x="844.40" y="1040.22" font-size="11" text-anchor="end" fill="#000" letter-spacing="0.2" >4</text><text x="844.40" y="1016.08" font-size="11" text-anchor="end" fill="#000" letter-spacing="0.2" >6</text><text x="844.40" y="991.94" font-size="11" text-anchor="end" fill="#000" letter-spacing="0.2" >8</text><text x="844.40" y="967.80" font-size="11" text-anchor="end" fill="#000" letter-spacing="0.2" >10</text><text x="844.40" y="943.66" font-size="11" text-anchor="end" fill="#000" letter-spacing="0.2" >12</text><text x="844.40" y="919.52" font-size="11" text-anchor="end" fill="#000" letter-spacing="0.2" >14</text><path d="M859.6 1086.5 v5 M933.3 1086.5 v5 M1007.0 1086.5 v5 M1080.8 1086.5 v5 M1154.5 1086.5 v5 M1228.2 1086.5 v5 M878.0 1086.5 v3 M896.5 1086.5 v3 M914.9 1086.5 v3 M951.8 1086.5 v3 M970.2 1086.5 v3 M988.6 1086.5 v3 M1025.5 1086.5 v3 M1043.9 1086.5 v3 M1062.3 1086.5 v3 M1099.2 1086.5 v3 M1117.6 1086.5 v3 M1136.0 1086.5 v3 M1172.9 1086.5 v3 M1191.3 1086.5 v3 M1209.8 1086.5 v3 M1246.6 1086.5 v3 M1265.1 1086.5 v3 M1283.5 1086.5 v3 M853 1084.5 h-5 M853 1060.4 h-5 M853 1036.2 h-5 M853 1012.1 h-5 M853 987.9 h-5 M853 963.8 h-5 M853 939.7 h-5 M853 915.5 h-5 M853 1084.5 h-3 M853 1078.5 h-3 M853 1072.4 h-3 M853 1066.4 h-3 M853 1060.4 h-3 M853 1054.3 h-3 M853 1048.3 h-3 M853 1042.3 h-3 M853 1036.2 h-3 M853 1030.2 h-3 M853 1024.2 h-3 M853 1018.1 h-3 M853 1012.1 h-3 M853 1006.0 h-3 M853 1000.0 h-3 M853 994.0 h-3 M853 987.9 h-3 M853 981.9 h-3 M853 975.9 h-3 M853 969.8 h-3 M853 963.8 h-3 M853 957.8 h-3 M853 951.7 h-3 M853 945.7 h-3 M853 939.7 h-3 M853 933.6 h-3 M853 927.6 h-3 M853 921.6 h-3 M853 915.5 h-3" stroke="#9a9a9a" stroke-width="1" fill="none"/><text x="967.00" y="904.00" font-size="11" text-anchor="start" fill="#200890" textLength="156.7" lengthAdjust="spacing" >56.0% with DTA &lt;=3.0 mm</text><text x="989.00" y="1115.50" font-size="11" text-anchor="start" fill="#000" textLength="164.5" lengthAdjust="spacing" >Distance to Agreement [mm]</text><text x="821.5" y="1060.3" font-size="11" text-anchor="start" textLength="124.6" lengthAdjust="spacing" transform="rotate(-90 821.5 1060.3)">Frequency [% of 496]</text><use href="#iMax" x="1288" y="887" width="13" height="13"/><rect x="1360" y="915" width="433" height="169.5" fill="url(#gPlot)"/><path d="M1363.4 915 V1084.5 M1562.4 915 V1084.5 M1761.4 915 V1084.5 M1360 1057.8 H1793 M1360 1031.1 H1793 M1360 1004.4 H1793 M1360 977.7 H1793 M1360 951.0 H1793 M1360 924.3 H1793" stroke="#989898" stroke-width="1" stroke-dasharray="3 2" fill="none" shape-rendering="crispEdges"/><g clip-path="url(#cp1360)"><rect x="1364.0" y="1059.5" width="8.7" height="27.0" fill="#0000ff" stroke="#000078" stroke-width="0.9"/><rect x="1374.0" y="1048.7" width="8.7" height="37.8" fill="#0000ff" stroke="#000078" stroke-width="0.9"/><rect x="1383.9" y="1018.3" width="8.7" height="68.2" fill="#0000ff" stroke="#000078" stroke-width="0.9"/><rect x="1393.9" y="1046.5" width="8.7" height="40.0" fill="#0000ff" stroke="#000078" stroke-width="0.9"/><rect x="1403.8" y="1048.7" width="8.7" height="37.8" fill="#0000ff" stroke="#000078" stroke-width="0.9"/><rect x="1413.8" y="1054.3" width="8.7" height="32.2" fill="#0000ff" stroke="#000078" stroke-width="0.9"/><rect x="1423.7" y="1059.5" width="8.7" height="27.0" fill="#0000ff" stroke="#000078" stroke-width="0.9"/><rect x="1433.7" y="1040.6" width="8.7" height="45.9" fill="#0000ff" stroke="#000078" stroke-width="0.9"/><rect x="1443.6" y="1065.7" width="8.7" height="20.8" fill="#0000ff" stroke="#000078" stroke-width="0.9"/><rect x="1453.6" y="1076.5" width="8.7" height="10.0" fill="#0000ff" stroke="#000078" stroke-width="0.9"/><rect x="1463.5" y="1076.5" width="8.7" height="10.0" fill="#0000ff" stroke="#000078" stroke-width="0.9"/><rect x="1473.5" y="1081.4" width="8.7" height="5.1" fill="#0000ff" stroke="#000078" stroke-width="0.9"/><rect x="1483.4" y="1059.5" width="8.7" height="27.0" fill="#0000ff" stroke="#000078" stroke-width="0.9"/><rect x="1493.4" y="1065.7" width="8.7" height="20.8" fill="#0000ff" stroke="#000078" stroke-width="0.9"/><rect x="1503.3" y="1029.5" width="8.7" height="57.0" fill="#0000ff" stroke="#000078" stroke-width="0.9"/><rect x="1513.3" y="1013.5" width="8.7" height="73.0" fill="#0000ff" stroke="#000078" stroke-width="0.9"/><rect x="1523.2" y="1037.6" width="8.7" height="48.9" fill="#0000ff" stroke="#000078" stroke-width="0.9"/><rect x="1533.2" y="1046.5" width="8.7" height="40.0" fill="#0000ff" stroke="#000078" stroke-width="0.9"/><rect x="1543.1" y="1048.7" width="8.7" height="37.8" fill="#0000ff" stroke="#000078" stroke-width="0.9"/><rect x="1553.1" y="1076.5" width="8.7" height="10.0" fill="#0000ff" stroke="#000078" stroke-width="0.9"/><rect x="1563.0" y="1048.7" width="8.7" height="37.8" fill="#0000ff" stroke="#000078" stroke-width="0.9"/><rect x="1573.0" y="1062.5" width="8.7" height="24.0" fill="#0000ff" stroke="#000078" stroke-width="0.9"/><rect x="1582.9" y="1043.5" width="8.7" height="43.0" fill="#0000ff" stroke="#000078" stroke-width="0.9"/><rect x="1592.9" y="1062.5" width="8.7" height="24.0" fill="#0000ff" stroke="#000078" stroke-width="0.9"/><rect x="1602.8" y="1051.4" width="8.7" height="35.1" fill="#0000ff" stroke="#000078" stroke-width="0.9"/><rect x="1612.8" y="1059.5" width="8.7" height="27.0" fill="#0000ff" stroke="#000078" stroke-width="0.9"/><rect x="1622.7" y="1051.4" width="8.7" height="35.1" fill="#0000ff" stroke="#000078" stroke-width="0.9"/><rect x="1632.7" y="1057.8" width="8.7" height="28.7" fill="#0000ff" stroke="#000078" stroke-width="0.9"/><rect x="1642.6" y="1057.8" width="8.7" height="28.7" fill="#0000ff" stroke="#000078" stroke-width="0.9"/><rect x="1652.6" y="1057.8" width="8.7" height="28.7" fill="#0000ff" stroke="#000078" stroke-width="0.9"/><rect x="1662.5" y="1051.4" width="8.7" height="35.1" fill="#0000ff" stroke="#000078" stroke-width="0.9"/><rect x="1672.5" y="1026.4" width="8.7" height="60.1" fill="#0000ff" stroke="#000078" stroke-width="0.9"/><rect x="1682.4" y="1062.5" width="8.7" height="24.0" fill="#0000ff" stroke="#000078" stroke-width="0.9"/><rect x="1692.4" y="1073.6" width="8.7" height="12.9" fill="#0000ff" stroke="#000078" stroke-width="0.9"/><rect x="1702.3" y="1068.5" width="8.7" height="18.0" fill="#0000ff" stroke="#000078" stroke-width="0.9"/><rect x="1712.3" y="1070.6" width="8.7" height="15.9" fill="#0000ff" stroke="#000078" stroke-width="0.9"/><rect x="1722.2" y="1073.6" width="8.7" height="12.9" fill="#0000ff" stroke="#000078" stroke-width="0.9"/><rect x="1732.2" y="1059.5" width="8.7" height="27.0" fill="#0000ff" stroke="#000078" stroke-width="0.9"/><rect x="1742.1" y="1073.6" width="8.7" height="12.9" fill="#0000ff" stroke="#000078" stroke-width="0.9"/><rect x="1752.1" y="1062.5" width="8.7" height="24.0" fill="#0000ff" stroke="#000078" stroke-width="0.9"/><rect x="1762.0" y="1070.6" width="8.7" height="15.9" fill="#0000ff" stroke="#000078" stroke-width="0.9"/><rect x="1781.9" y="817.5" width="8.7" height="269.0" fill="#ff0000" stroke="#b00000" stroke-width="0.9"/></g><path d="M1562.4 915 V1084.5" stroke="#ff0000" stroke-width="1" stroke-dasharray="3 1" shape-rendering="crispEdges"/><path d="M1360 915.5 H1793.5 V1084.5" fill="none" stroke="#111" stroke-width="1.2"/><path d="M1361 915 V1085.5 H1794" fill="none" stroke="#3c3c3c" stroke-width="2.2"/><text x="1363.40" y="1102.00" font-size="11" text-anchor="middle" fill="#000" letter-spacing="0.2" >0</text><text x="1562.40" y="1102.00" font-size="11" text-anchor="middle" fill="#000" letter-spacing="0.2" >1</text><text x="1761.40" y="1102.00" font-size="11" text-anchor="middle" fill="#000" letter-spacing="0.2" >2</text><text x="1350.40" y="1061.80" font-size="11" text-anchor="end" fill="#000" letter-spacing="0.2" >2</text><text x="1350.40" y="1035.10" font-size="11" text-anchor="end" fill="#000" letter-spacing="0.2" >4</text><text x="1350.40" y="1008.40" font-size="11" text-anchor="end" fill="#000" letter-spacing="0.2" >6</text><text x="1350.40" y="981.70" font-size="11" text-anchor="end" fill="#000" letter-spacing="0.2" >8</text><text x="1350.40" y="955.00" font-size="11" text-anchor="end" fill="#000" letter-spacing="0.2" >10</text><text x="1350.40" y="928.30" font-size="11" text-anchor="end" fill="#000" letter-spacing="0.2" >12</text><path d="M1363.4 1086.5 v5 M1562.4 1086.5 v5 M1761.4 1086.5 v5 M1413.2 1086.5 v3 M1462.9 1086.5 v3 M1512.7 1086.5 v3 M1612.2 1086.5 v3 M1661.9 1086.5 v3 M1711.7 1086.5 v3 M1359 1057.8 h-5 M1359 1031.1 h-5 M1359 1004.4 h-5 M1359 977.7 h-5 M1359 951.0 h-5 M1359 924.3 h-5 M1359 1084.5 h-3 M1359 1077.8 h-3 M1359 1071.2 h-3 M1359 1064.5 h-3 M1359 1057.8 h-3 M1359 1051.1 h-3 M1359 1044.5 h-3 M1359 1037.8 h-3 M1359 1031.1 h-3 M1359 1024.4 h-3 M1359 1017.8 h-3 M1359 1011.1 h-3 M1359 1004.4 h-3 M1359 997.7 h-3 M1359 991.0 h-3 M1359 984.4 h-3 M1359 977.7 h-3 M1359 971.0 h-3 M1359 964.4 h-3 M1359 957.7 h-3 M1359 951.0 h-3 M1359 944.3 h-3 M1359 937.6 h-3 M1359 931.0 h-3 M1359 924.3 h-3 M1359 917.6 h-3" stroke="#9a9a9a" stroke-width="1" fill="none"/><text x="1460.00" y="904.00" font-size="11" text-anchor="start" fill="#200890" textLength="182.0" lengthAdjust="spacing" >47.6% (90.0%) with index &lt;= 1</text><text x="1538.40" y="1115.50" font-size="11" text-anchor="start" fill="#000" textLength="77.2" lengthAdjust="spacing" >Local Gamma</text><text x="1327.5" y="1060.3" font-size="11" text-anchor="start" textLength="124.6" lengthAdjust="spacing" transform="rotate(-90 1327.5 1060.3)">Frequency [% of 487]</text><text x="1705.50" y="926.00" font-size="11" text-anchor="start" fill="#000" textLength="86.6" lengthAdjust="spacing" >average = 1.10</text><text x="1725.20" y="941.00" font-size="11" text-anchor="start" fill="#000" textLength="66.8" lengthAdjust="spacing" >max = 3.21</text><use href="#iMax" x="1794" y="887" width="13" height="13"/></svg>
<!-- sec_scene -->
<div style="left:2px;top:854px;width:279px;height:281px;background:#fbfbfb;"></div>
<div style="left:2px;top:854px;width:1px;height:6px;background:#fff;"></div>
<div style="left:3px;top:854px;width:277px;height:1px;background:#fff;"></div>
<div style="left:3px;top:858px;width:277px;height:1px;background:#fff;"></div>
<div style="left:3px;top:859px;width:277px;height:273px;background:#fff;box-shadow:inset -1px -1px 0 #dcdcdc"></div>
<div style="left:71px;top:859px;width:208px;height:22px;background:#fbfbfb;"></div>
<div style="left:3px;top:859px;width:68px;height:23px;background:#fff;box-shadow:inset 0 1px 0 #dcdcdc, inset -1px 0 0 #dcdcdc"></div>
<div style="left:71px;top:861px;width:59px;height:20px;background:#f0f0f0;box-shadow:inset 0 0 0 1px #d9d9d9"></div>
<div style="left:129px;top:861px;width:84px;height:20px;background:#f0f0f0;box-shadow:inset 0 0 0 1px #d9d9d9"></div>
<div style="left:212px;top:861px;width:41px;height:20px;background:#f0f0f0;box-shadow:inset 0 0 0 1px #d9d9d9"></div>
<div style="left:3px;top:881px;width:276px;height:1px;background:#e4e4e4;"></div>
<span class="t l" style="left:32.00px;top:863.00px;font-size:12.5px;line-height:14px;transform:scaleX(0.8131);transform-origin:0 0;">Gantry</span>
<span class="t l" style="left:97.00px;top:865.00px;font-size:12.5px;line-height:14px;transform:scaleX(0.8116);transform-origin:0 0;">Beam</span>
<span class="t l" style="left:157.00px;top:865.00px;font-size:12.5px;line-height:14px;transform:scaleX(0.8192);transform-origin:0 0;">Comments</span>
<svg style="left:0;top:859px" width="250" height="24" viewBox="0 859 250 24"><use href="#iGan" x="10" y="862" width="15" height="15"/><path d="M14.6 867.6 L11 875.8 H19Z" fill="#0808f0"/><path d="M13.6 869 L11.6 873.6 H13.4Z" fill="#2890ff"/><path d="M78.5 865.5 V877.5 H89.5 V865.5" fill="#fff" stroke="#222" stroke-width="1"/><path d="M76.5 863.5 H87.5 V875.5 H76.5Z" fill="#fff" stroke="#222" stroke-width="1"/><path d="M78 866 H86 M78 868 H86 M78 870 H86 M78 872 H83" stroke="#787878" stroke-width="1"/><circle cx="85.4" cy="873.4" r="1.4" fill="#fff" stroke="#222" stroke-width="0.9"/><path d="M139 864.5 H149 Q151.5 864.5 151.5 867 V870 Q151.5 872.5 149 872.5 H144.5 L140 876.5 L141 872.5 H139 Q136.5 872.5 136.5 870 V867 Q136.5 864.5 139 864.5Z" fill="#f8d820" stroke="#3a3000" stroke-width="1.1"/><path d="M139 866.4 H148.6" stroke="#fff8a0" stroke-width="1.2"/><rect x="219.5" y="863.5" width="15" height="15" fill="#dfe4f4" stroke="#4858b0" stroke-width="1"/><rect x="219" y="863" width="16" height="3" fill="#4060c8"/><rect x="220" y="864" width="14" height="1" fill="#a8b8f0"/></svg>
<span class="t s" style="left:220.80px;top:865.00px;font-size:13px;line-height:15px;color:#111;letter-spacing:-0.7px;">31</span>
<svg style="left:6px;top:882px" width="271" height="247" viewBox="6 882 271 247"><defs><linearGradient id="gGan" x1="0.2" y1="0" x2="0.9" y2="1"><stop offset="0" stop-color="#f0f0f0"/><stop offset="0.35" stop-color="#ffffff"/><stop offset="0.7" stop-color="#f6f6f6"/><stop offset="1" stop-color="#c4c4c4"/></linearGradient><linearGradient id="gBore" x1="0.1" y1="0.1" x2="0.9" y2="0.95"><stop offset="0" stop-color="#162026"/><stop offset="0.3" stop-color="#3c5660"/><stop offset="0.6" stop-color="#6c929c"/><stop offset="1" stop-color="#a6ced6"/></linearGradient><linearGradient id="gBand" x1="0" y1="0" x2="1" y2="0.6"><stop offset="0" stop-color="#f2f2f2"/><stop offset="1" stop-color="#cfcfcf"/></linearGradient><linearGradient id="gCres" x1="0" y1="0" x2="1" y2="0"><stop offset="0" stop-color="#4a4a4a"/><stop offset="0.5" stop-color="#6c6c6c"/><stop offset="1" stop-color="#a4a4a4"/></linearGradient><linearGradient id="gCouch" x1="0" y1="0" x2="1" y2="1"><stop offset="0" stop-color="#a9b9d5"/><stop offset="1" stop-color="#9fb0cc"/></linearGradient><linearGradient id="gCylB" gradientUnits="userSpaceOnUse" x1="1130" y1="180" x2="1230" y2="640"><stop offset="0" stop-color="#dcdcdc"/><stop offset="0.3" stop-color="#ffffff"/><stop offset="0.65" stop-color="#b4b4b4"/><stop offset="1" stop-color="#606060"/></linearGradient><linearGradient id="gBoxL" x1="0" y1="0" x2="1" y2="0.3"><stop offset="0" stop-color="#a4a4a4"/><stop offset="0.4" stop-color="#c6c6c6"/><stop offset="1" stop-color="#b0b0b0"/></linearGradient></defs><rect x="6" y="882" width="271" height="247" fill="#e5e5e5"/><g transform="translate(0,875) scale(0.22411)"><path d="M478 20 C438 150 440 330 500 520 L640 905 C760 1000 1000 1070 1250 1090 L1250 20Z" fill="url(#gGan)"/><path d="M478 20 C438 150 440 330 500 520 L520 520 C468 330 470 150 508 20Z" fill="#f4f4f4"/><path d="M470 20 C430 150 432 330 492 520" fill="none" stroke="#9c9c9c" stroke-width="7"/><path d="M500 20 C462 150 464 330 516 500" fill="none" stroke="#b4b4b4" stroke-width="5"/><path d="M545 30 C530 80 505 140 492 190" fill="none" stroke="#555" stroke-width="9" stroke-dasharray="7 5"/><path d="M545 1030 L690 905 L1250 1050 L1250 1140 L545 1140Z" fill="#e4e4e4"/><path d="M700 898 C830 1000 1040 1040 1250 1047 L1250 1140 L1092 1140 L827 1003 L700 905Z" fill="url(#gBand)"/><path d="M722 876 C850 990 1040 1050 1250 1062" fill="none" stroke="#fbfbfb" stroke-width="9"/><path d="M744 884 Q870 960 1005 976 Q1130 975 1250 892 L1250 1047 Q1040 1035 886 976 Q800 935 744 893Z" fill="url(#gCres)"/><path d="M686 902 L702 900 L827 1003 L1092 1140 L981 1140 L676 924Z" fill="#000"/><ellipse cx="846" cy="484" rx="226" ry="282" transform="rotate(-11 846 484)" fill="#a3cfdc" stroke="#8fbfce" stroke-width="5"/><ellipse cx="866" cy="476" rx="166" ry="214" transform="rotate(-11 866 476)" fill="url(#gBore)" stroke="#7faab6" stroke-width="6"/><path d="M720 330 L1000 420 M715 400 L1015 500 M720 470 L1020 580 M740 560 L1010 660" stroke="#8fb6bf" stroke-width="14" opacity="0.35"/><path d="M513 268 L600 290 L600 388 L518 360Z" fill="#000080"/><path d="M1125 423 L1240 452 L1240 592 L1105 548Z" fill="#000080"/><circle cx="558" cy="400" r="8" fill="#e01010"/><circle cx="1183" cy="608" r="13" fill="#e01010"/><circle cx="1183" cy="610" r="17" fill="none" stroke="#ccc" stroke-width="3"/><path d="M20 825 L845 640 L985 690 L545 1000 L545 1140 L20 1140Z" fill="url(#gCouch)"/><path d="M545 1000 L985 690 L985 718 L545 1032Z" fill="#7288ae"/><path d="M415 1140 L540 1028 L540 1140Z" fill="#1e3e60"/><path d="M466 1140 L540 1074 M436 1140 L540 1048 M500 1140 L540 1104" stroke="#4a88c8" stroke-width="9"/><path d="M545 1030 L545 1140" stroke="#506890" stroke-width="5"/><path d="M546 988 L676 904" stroke="#ee0808" stroke-width="21"/><path d="M658 884 L708 885 L694 928 L672 922Z" fill="#ee0808"/><path d="M128 488 L213 940 M48 668 L370 937" stroke="#ff0000" stroke-width="6"/></g><g transform="translate(30,960) scale(0.104330)"><ellipse cx="940" cy="940" rx="42" ry="18" fill="#e6e6e6"/><ellipse cx="1465" cy="630" rx="36" ry="16" fill="#e6e6e6"/><path d="M870 830 L975 760 L990 900 L930 925Z" fill="#000"/><path d="M1395 540 L1490 480 L1510 600 L1450 625Z" fill="#000"/><path d="M1265 78 L1385 105 L1395 150 L1480 290 L1532 330 L1522 470 L1478 490 L1430 545 L1300 200Z" fill="#000"/><path d="M812 303 L1312 118 C1420 170 1500 330 1470 470 C1460 510 1440 535 1420 545 L990 722 C985 600 900 450 812 303Z" fill="url(#gCylB)"/><path d="M935 268 Q1095 410 1100 642" fill="none" stroke="#000" stroke-width="14"/><path d="M1200 170 Q1375 330 1355 548" fill="none" stroke="#000" stroke-width="14"/><path d="M1085 215 Q1250 370 1238 540 Q1225 630 1155 655" fill="none" stroke="#f00" stroke-width="10"/><path d="M812 303 L1320 118 M1000 640 L1485 395" stroke="#f00" stroke-width="10"/><path d="M960 240 Q1000 205 1065 218" fill="none" stroke="#f00" stroke-width="5"/><path d="M165 560 L255 455 L365 510 L375 690 L540 800 L545 985 L430 1040 L300 900 L235 800 L175 700Z" fill="url(#gBoxL)"/><path d="M255 455 L700 290 L815 335 L365 510Z" fill="#c8c8c8"/><path d="M365 510 L805 340 L785 520 L375 690Z" fill="#a9a9a9"/><path d="M375 690 L785 520 L975 590 L540 800Z" fill="#c2c2c2"/><path d="M785 400 L850 440 L900 560 L860 555 L785 520Z" fill="#b4b4b4"/><path d="M540 800 L975 590 L992 752 L545 985Z" fill="#9a9a9a"/><path d="M430 1040 L545 985 L992 752 L985 775 L550 1012 L470 975Z" fill="#000"/><path d="M232 695 Q246 738 306 784 Q366 828 398 832 Q392 806 335 766 Q270 720 232 695Z" fill="#000"/><path d="M305 900 L380 945 L392 985 L322 950Z" fill="#e4e4e4"/><path d="M705 285 Q800 300 830 345 Q870 450 930 530 Q990 580 990 752" fill="none" stroke="#000" stroke-width="17"/></g></svg>
<!-- sec_status -->
<div style="left:0px;top:1134px;width:1814px;height:26px;background:#fbfbfb;"></div>
<div style="left:2px;top:1137px;width:555px;height:22px;background:linear-gradient(180deg,#fafafa,#f2f2f2);border-radius:3px"></div>
<span class="t l" style="left:31.00px;top:1140.00px;font-size:12px;line-height:14px;letter-spacing:0.178px;">Administrator</span>
<span class="t l" style="left:309.00px;top:1140.00px;font-size:12px;line-height:14px;letter-spacing:-0.483px;">100% = 2.5000 Gy</span>
<span class="t l" style="left:438.00px;top:1140.00px;font-size:12px;line-height:14px;letter-spacing:0.271px;">-- min (-- %)</span>
<span class="t l" style="left:236.00px;top:1140.00px;font-size:12px;line-height:14px;letter-spacing:1.004px;">--</span>
<svg style="left:0;top:1135px" width="600" height="25" viewBox="0 1135 600 25"><rect x="6" y="1139" width="2" height="2" fill="#b8b8b8"/><rect x="550" y="1139" width="2" height="2" fill="#b8b8b8"/><rect x="6" y="1143" width="2" height="2" fill="#b8b8b8"/><rect x="550" y="1143" width="2" height="2" fill="#b8b8b8"/><rect x="6" y="1147" width="2" height="2" fill="#b8b8b8"/><rect x="550" y="1147" width="2" height="2" fill="#b8b8b8"/><rect x="6" y="1151" width="2" height="2" fill="#b8b8b8"/><rect x="550" y="1151" width="2" height="2" fill="#b8b8b8"/><circle cx="20.5" cy="1147.2" r="4.4" fill="#000080"/><path d="M14 1155 L14 1153.6 L17 1151.4 L24 1151.4 L27 1153.6 L27 1155Z" fill="#000080"/><rect x="115" y="1139" width="1" height="17" fill="#c4c4c4"/><rect x="145" y="1139" width="1" height="17" fill="#c4c4c4"/><rect x="173" y="1139" width="1" height="17" fill="#c4c4c4"/><rect x="215" y="1139" width="1" height="17" fill="#c4c4c4"/><rect x="298" y="1139" width="1" height="17" fill="#c4c4c4"/><rect x="412" y="1139" width="1" height="17" fill="#c4c4c4"/><rect x="542" y="1139" width="1" height="17" fill="#c4c4c4"/><rect x="123" y="1142" width="6" height="2.6" fill="#fff" stroke="#bbb" stroke-width="0.6"/><rect x="122" y="1144.8" width="7" height="2.6" fill="#fff" stroke="#bbb" stroke-width="0.6"/><rect x="122" y="1147.6" width="7" height="2.6" fill="#fff" stroke="#bbb" stroke-width="0.6"/><rect x="129" y="1141.6" width="8" height="9.4" fill="#9a9a9a"/><rect x="129.5" y="1141.6" width="1.2" height="9.4" fill="#222"/><rect x="135.6" y="1141" width="1.2" height="3" fill="#a01010"/><path d="M152 1142.5 h3 M152 1144.5 h2 M152 1146.5 h3" stroke="#222" stroke-width="0.9"/><path d="M157.5 1149 V1143 Q157.5 1141 159.5 1141 Q161.5 1141 161.5 1143 V1149 Q163.4 1150.4 163.4 1152 Q163.4 1155.6 159.5 1155.6 Q155.6 1155.6 155.6 1152 Q155.6 1150.4 157.5 1149Z" fill="#fff" stroke="#111" stroke-width="1"/><circle cx="159.5" cy="1152" r="2.5" fill="#e01010"/><rect x="158.6" y="1144" width="1.8" height="7" fill="#e01010"/><rect x="182.5" y="1139.5" width="15" height="15" fill="#dfe4f4" stroke="#4858b0" stroke-width="1"/><rect x="182" y="1139" width="16" height="3" fill="#4060c8"/><rect x="183" y="1140" width="14" height="1" fill="#a8b8f0"/><path d="M201 1146 h6 l-3 3.4z" fill="#000"/><path d="M219 1141.5 H231.6 Q233 1141.5 233 1143 V1153.6 H229 V1147 Q229 1145.6 227.6 1145.6 H220.4 Q219 1145.6 219 1144.2Z" fill="#5a98e0" stroke="#2858a8" stroke-width="0.8"/><path d="M220 1142.4 H231.8" stroke="#a8d0ff" stroke-width="1"/><path d="M229.6 1147 V1153.6" stroke="#98c4f4" stroke-width="1.2"/><path d="M252 1146 h6 l-3 3.4z" fill="#000"/><path d="M264 1141.5 H276.6 Q278 1141.5 278 1143 V1153.6 H274 V1147 Q274 1145.6 272.6 1145.6 H265.4 Q264 1145.6 264 1144.2Z" fill="#5a98e0" stroke="#2858a8" stroke-width="0.8"/><path d="M265 1142.4 H276.8" stroke="#a8d0ff" stroke-width="1"/><path d="M274.6 1147 V1153.6" stroke="#98c4f4" stroke-width="1.2"/><rect x="270" y="1139.6" width="3" height="2" fill="#d0d0d0"/><path d="M282 1146 h6 l-3 3.4z" fill="#000"/><rect x="422.5" y="1141.5" width="9" height="13" rx="2.2" fill="#58c838" stroke="#4a6a40" stroke-width="1"/><ellipse cx="427" cy="1142.2" rx="4" ry="1.6" fill="#d8e8d0" stroke="#666" stroke-width="0.7"/><rect x="424" y="1144" width="2" height="9" fill="#a0f080" opacity="0.8"/><path d="M514 1141.5 h7 M514 1155.5 h7 M517.5 1141.5 V1155.5" stroke="#777" stroke-width="1" fill="none"/><path d="M521.5 1146.4 l4 4 M525.5 1146.4 l-4 4 M523.5 1145.6 v5.6 M520.8 1148.4 h5.6" stroke="#666" stroke-width="0.7"/><path d="M529 1146 h6 l-3 3.4z" fill="#000"/></svg>
<span class="t s" style="left:183.80px;top:1141.00px;font-size:13px;line-height:15px;color:#111;letter-spacing:-0.7px;">31</span>
</body></html>
